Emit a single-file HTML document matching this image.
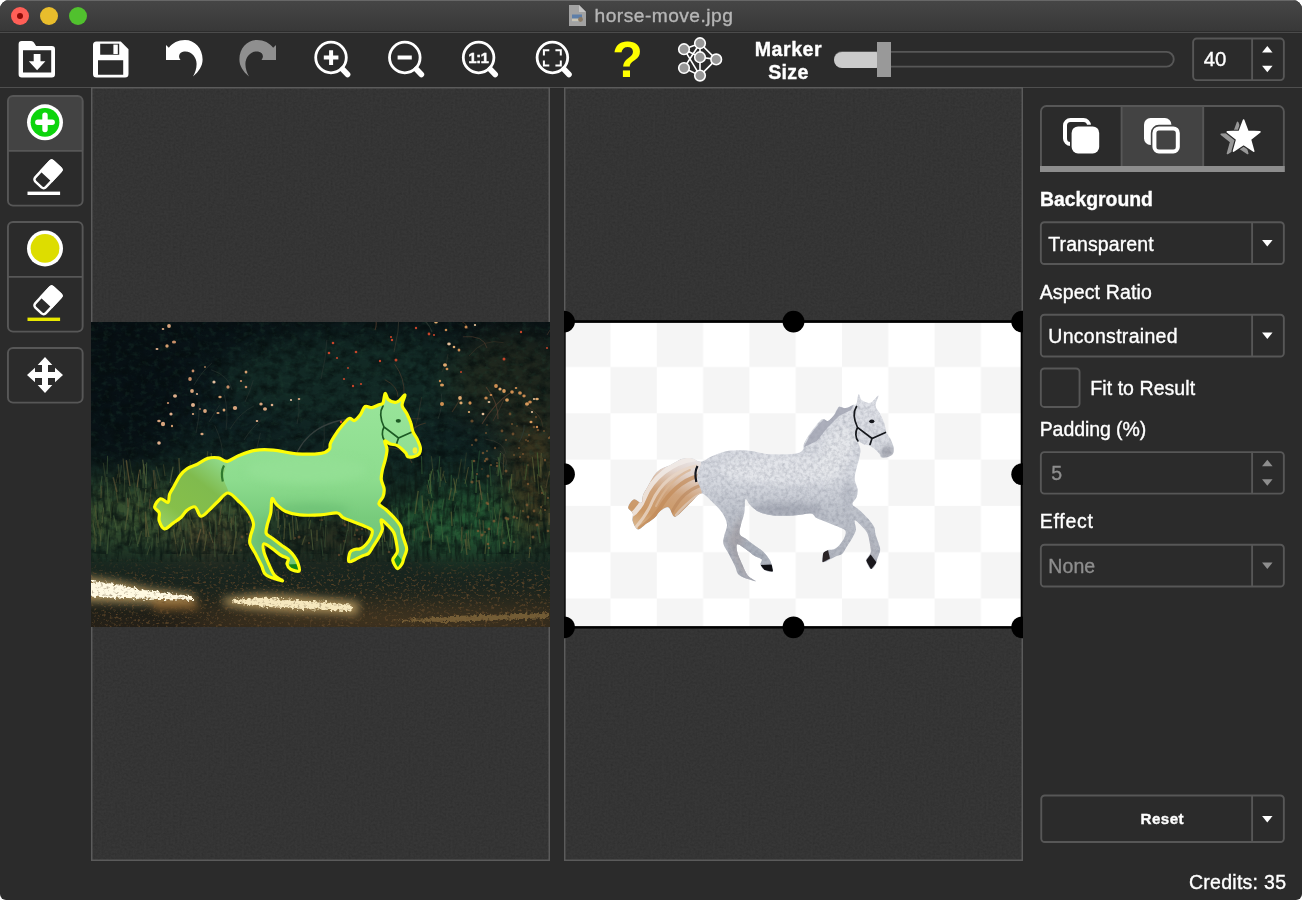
<!DOCTYPE html><html lang="en"><head><meta charset="utf-8"><title>horse-move.jpg</title><style>
*{box-sizing:border-box;margin:0;padding:0}
html,body{width:1302px;height:900px;background:#fff;overflow:hidden}
body{font-family:"Liberation Sans",sans-serif;color:#fff}
.win{will-change:transform;position:absolute;left:0;top:0;width:1302px;height:900px;background:#2b2b2b;border-radius:9px 9px 6px 6px;overflow:hidden}
.abs{position:absolute}
.tbar{left:0;top:0;width:1302px;height:31px;background:linear-gradient(#464646,#414141 35%,#383838)}
.tl{width:18px;height:18px;border-radius:9px;top:7px}
.title{top:5px;left:595px;font-size:18.4px;line-height:22px;color:#b6b6b6;white-space:nowrap}
.lbl{font-size:19.3px;line-height:22px;white-space:nowrap;color:#fff;-webkit-text-stroke:0.35px currentColor}
.b{font-weight:bold}
.box{border:1px solid #5d5d5d;border-radius:4.5px}
.dis{color:#8e8e8e}
svg{position:absolute;overflow:visible}
</style></head><body><div class="win">
<div class="abs tbar"></div>
<div class="abs" style="left:0;top:0;width:1302px;height:1px;background:#676767"></div>
<div class="abs" style="left:0;top:31px;width:1302px;height:1px;background:#2c2c2c"></div>
<div class="abs" style="left:0;top:32px;width:1302px;height:1px;background:#4b4b4b"></div>
<div class="abs tl" style="left:11px;background:#ff5f57"></div><div class="abs" style="left:17.2px;top:13.2px;width:5.4px;height:5.4px;border-radius:3px;background:#8c0a06"></div>
<div class="abs tl" style="left:40px;background:#e9bd2c"></div>
<div class="abs tl" style="left:69px;background:#51c12e"></div>
<svg style="left:569px;top:5px" width="17" height="21" viewBox="0 0 17 21"><path d="M0 0h10l7 7v14H0z" fill="#a2a2a2"/><path d="M10 0l7 7h-7z" fill="#c4c4c4"/><rect x="3" y="9.5" width="10" height="7" fill="#5d7ea8"/><rect x="3" y="13.5" width="10" height="3" fill="#c9c4b4"/><circle cx="11.5" cy="14.5" r="2.4" fill="#8a7a66"/></svg>
<div class="abs lbl" style="left:594.60px;top:5.15px;font-size:19.2px;line-height:22.0px;letter-spacing:0.459px;color:#b6b6b6;">horse-move.jpg</div>
<div class="abs" style="left:0;top:87px;width:1302px;height:1px;background:#4f4f4f"></div>
<svg style="left:0;top:0" width="1302" height="900" viewBox="0 0 1302 900"><path d="M18.6 44.2a3.2 3.2 0 0 1 3.2-3.2h9.4a3.2 3.2 0 0 1 2.7 1.5l2.2 3.5h15.7a3.2 3.2 0 0 1 3.2 3.2v25a3.2 3.2 0 0 1-3.2 3.2h-30a3.2 3.2 0 0 1-3.2-3.2zM23 50.2v22.3h28.2v-22.3z" fill="#fff" fill-rule="evenodd"/><path d="M33.7 54h6.8v7.2h4.9l-8.3 9l-8.3-9h4.9z" fill="#fff"/><path d="M93 45a3.5 3.5 0 0 1 3.5-3.5h24.3l7.7 7.7v24.8a3.5 3.5 0 0 1-3.5 3.5h-28.5a3.5 3.5 0 0 1-3.5-3.5zM100.2 43.8v10.9h19v-10.9z M98 60.3v14.4h25.2v-14.4z" fill="#fff" fill-rule="evenodd"/><rect x="113.4" y="44.6" width="4.4" height="9.4" fill="#fff"/><path d="M166 45L166 60L180.5 60C178 57 178.6 52.6 184 51.6C191 50.6 196.6 57 196.6 64C196.6 69 195 73 193 76.6C199 71.6 202.6 66 202.6 59.6C202.6 48 194.6 40 185 40C178 40 172.6 43 168.8 47.8Z" fill="#fff"/><path d="M166 45L166 60L180.5 60C178 57 178.6 52.6 184 51.6C191 50.6 196.6 57 196.6 64C196.6 69 195 73 193 76.6C199 71.6 202.6 66 202.6 59.6C202.6 48 194.6 40 185 40C178 40 172.6 43 168.8 47.8Z" fill="#8f8f8f" transform="translate(442,0) scale(-1,1)"/><circle cx="331" cy="57.5" r="15.3" fill="none" stroke="#fff" stroke-width="2.8"/><path d="M342.6 69.3L347.6 74.5" stroke="#fff" stroke-width="5.6" stroke-linecap="round"/><path d="M323.8 57.5h14.6M331.1 50.3v14.6" stroke="#fff" stroke-width="4"/><circle cx="404.8" cy="57.5" r="15.3" fill="none" stroke="#fff" stroke-width="2.8"/><path d="M416.40000000000003 69.3L421.40000000000003 74.5" stroke="#fff" stroke-width="5.6" stroke-linecap="round"/><path d="M397.6 57.5h14.2" stroke="#fff" stroke-width="4"/><circle cx="478.6" cy="57.5" r="15.3" fill="none" stroke="#fff" stroke-width="2.8"/><path d="M490.20000000000005 69.3L495.20000000000005 74.5" stroke="#fff" stroke-width="5.6" stroke-linecap="round"/><text x="478.6" y="62.6" font-family="Liberation Sans,sans-serif" font-weight="bold" font-size="14.5" text-anchor="middle" fill="#fff" stroke="#fff" stroke-width=".5" letter-spacing="-0.3">1:1</text><circle cx="552.4" cy="57.5" r="15.3" fill="none" stroke="#fff" stroke-width="2.8"/><path d="M564.0 69.3L569.0 74.5" stroke="#fff" stroke-width="5.6" stroke-linecap="round"/><path d="M543.9 55.5v-5.2h5.4M555.4 50.3h5.4v5.2M560.8 60.4v5.2h-5.4M549.3 65.6h-5.4v-5.2" fill="none" stroke="#fff" stroke-width="2"/><text x="627.6" y="77" font-family="Liberation Sans,sans-serif" font-weight="bold" font-size="50" text-anchor="middle" fill="#ffff00">?</text><path d="M684 49.2L700 43.2M684 49.2L700 57.2M684 49.2L700 75.6M684 68L700 43.2M684 68L700 75.6M700 43.2L716.2 59.4M700 57.2L716.2 59.4M700 75.6L716.2 59.4M700 57.2L700 75.6M700 43.2L700 57.2" stroke="#fff" stroke-width="1.6" fill="none"/><circle cx="700" cy="43.2" r="5.3" fill="#979797" stroke="#fff" stroke-width="1.6"/><circle cx="684" cy="49.2" r="5.3" fill="#979797" stroke="#fff" stroke-width="1.6"/><circle cx="700" cy="57.2" r="5.3" fill="#979797" stroke="#fff" stroke-width="1.6"/><circle cx="716.2" cy="59.4" r="5.3" fill="#979797" stroke="#fff" stroke-width="1.6"/><circle cx="684" cy="68" r="5.3" fill="#979797" stroke="#fff" stroke-width="1.6"/><circle cx="700" cy="75.6" r="5.3" fill="#979797" stroke="#fff" stroke-width="1.6"/></svg>
<div class="abs lbl" style="left:754.70px;top:38.01px;font-size:19.6px;line-height:22.0px;letter-spacing:0.543px;color:#fff;font-weight:bold;">Marker</div>
<div class="abs lbl" style="left:768.20px;top:60.71px;font-size:19.6px;line-height:22.0px;letter-spacing:0.293px;color:#fff;font-weight:bold;">Size</div>
<svg style="left:0;top:0" width="1302" height="900" viewBox="0 0 1302 900"><rect x="834.95" y="51.85" width="338.80" height="14.80" rx="7.35" fill="none" stroke="#575757" stroke-width="1.9"/><rect x="1193.15" y="38.55" width="90.70" height="41.60" rx="3.55" fill="none" stroke="#575757" stroke-width="1.9"/><path d="M1252.1 38V80.6" stroke="#575757" stroke-width="1.9"/></svg>
<div class="abs" style="left:834px;top:51.5px;width:50px;height:16px;border-radius:8px;background:#cbcbcb"></div>
<div class="abs" style="left:876.5px;top:42px;width:14.5px;height:35px;background:#999"></div>
<div class="abs lbl" style="left:1203.70px;top:48.13px;font-size:20.4px;line-height:22.0px;letter-spacing:0.000px;color:#fff;">40</div>
<svg style="left:0;top:0" width="1302" height="900"><path d="M1262.05 52.55h10.5l-5.25 -6.5z" fill="#fff"/><path d="M1262.05 65.75h10.5l-5.25 6.5z" fill="#fff"/></svg>
<svg style="left:0;top:0" width="1302" height="900" viewBox="0 0 1302 900"><path d="M8 102a6 6 0 0 1 6-6h63.5a6 6 0 0 1 6 6V150.5H8z" fill="#434343"/><rect x="7.95" y="95.95" width="74.70" height="109.70" rx="5.05" fill="none" stroke="#575757" stroke-width="1.9"/><path d="M7.5 150.9H83" stroke="#575757" stroke-width="1.9"/><rect x="7.95" y="221.95" width="74.70" height="109.70" rx="5.05" fill="none" stroke="#575757" stroke-width="1.9"/><path d="M7.5 276.9H83" stroke="#575757" stroke-width="1.9"/><rect x="7.95" y="347.95" width="74.70" height="54.70" rx="5.05" fill="none" stroke="#575757" stroke-width="1.9"/></svg>
<svg style="left:0;top:0" width="1302" height="900" viewBox="0 0 1302 900"><circle cx="45" cy="122.3" r="18" fill="#fff"/><circle cx="45" cy="122.3" r="14.4" fill="#0dd40d"/><path d="M37.8 122.3h14.4M45 115.1v14.4" stroke="#fff" stroke-width="5.4" stroke-linecap="round"/><g transform="translate(47.7,174.6) rotate(-47)"><rect x="-13.5" y="-7.25" width="27" height="14.5" rx="3" fill="none" stroke="#fff" stroke-width="2.5"/><path d="M-2.6 -8.5H12a2.75 2.75 0 0 1 2.75 2.75V5.75a2.75 2.75 0 0 1 -2.75 2.75H-2.6z" fill="#fff"/></g><rect x="27.5" y="191.6" width="32.6" height="3.4" fill="#fff"/><circle cx="45" cy="248.4" r="18" fill="#fff"/><circle cx="45" cy="248.4" r="14.4" fill="#dddd00"/><g transform="translate(47.7,300.6) rotate(-47)"><rect x="-13.5" y="-7.25" width="27" height="14.5" rx="3" fill="none" stroke="#fff" stroke-width="2.5"/><path d="M-2.6 -8.5H12a2.75 2.75 0 0 1 2.75 2.75V5.75a2.75 2.75 0 0 1 -2.75 2.75H-2.6z" fill="#fff"/></g><rect x="27.5" y="317.6" width="32.6" height="3.4" fill="#e8e800"/><path d="M45 357l7.3 8h-4.3v7h7v-4.3l8 7.3l-8 7.3v-4.3h-7v7h4.3l-7.3 8l-7.3-8h4.3v-7h-7v4.3l-8-7.3l8-7.3v4.3h7v-7h-4.3z" fill="#fff"/></svg>
<svg style="left:0;top:0" width="1302" height="900"><defs><filter id="grain" color-interpolation-filters="sRGB" x="0" y="0" width="100%" height="100%"><feTurbulence type="fractalNoise" baseFrequency="0.45" numOctaves="2" seed="3" result="n"/><feColorMatrix in="n" type="matrix" values="0 0 0 0 0  0 0 0 0 0  0 0 0 0 0  0.16 0.16 0 0 -0.12"/><feComposite operator="in" in2="SourceGraphic"/></filter></defs><rect x="91.75" y="87.75" width="457.5" height="772.5" fill="#373737" stroke="#5b5b5b" stroke-width="1.5"/><rect x="564.75" y="87.75" width="457.5" height="772.5" fill="#373737" stroke="#5b5b5b" stroke-width="1.5"/><rect x="92.5" y="88.5" width="456" height="771" fill="#000" filter="url(#grain)"/><rect x="565.5" y="88.5" width="456" height="771" fill="#000" filter="url(#grain)"/></svg>
<svg style="left:91px;top:322px;overflow:hidden" width="459" height="305" viewBox="0 0 459 305"><defs><linearGradient id="pbg" x1="0" y1="0" x2="0" y2="1"><stop offset="0" stop-color="#081115"/><stop offset="0.3" stop-color="#0c1b1f"/><stop offset="0.5" stop-color="#122823"/><stop offset="0.66" stop-color="#193325"/><stop offset="0.76" stop-color="#182c22"/><stop offset="0.8" stop-color="#18261f"/><stop offset="1" stop-color="#241f17"/></linearGradient><filter id="pb" color-interpolation-filters="sRGB" x="-30%" y="-30%" width="160%" height="160%"><feGaussianBlur stdDeviation="14"/></filter><filter id="pb2" color-interpolation-filters="sRGB" x="-30%" y="-30%" width="160%" height="160%"><feGaussianBlur stdDeviation="4"/></filter><filter id="pb1" color-interpolation-filters="sRGB" x="-30%" y="-60%" width="160%" height="220%"><feGaussianBlur stdDeviation="1.6"/></filter><filter id="leaf" color-interpolation-filters="sRGB" x="0" y="0" width="100%" height="100%"><feTurbulence type="fractalNoise" baseFrequency="0.09 0.11" numOctaves="4" seed="11"/><feColorMatrix type="matrix" values="0 0 0 0 0.02  0 0 0 0 0.05  0 0 0 0 0.05  1.6 0 0 0 -0.62"/></filter><filter id="leaf2" color-interpolation-filters="sRGB" x="0" y="0" width="100%" height="100%"><feTurbulence type="fractalNoise" baseFrequency="0.16 0.2" numOctaves="3" seed="5"/><feColorMatrix type="matrix" values="0 0 0 0 0.13  0 0 0 0 0.27  0 0 0 0 0.21  0 1.7 0 0 -0.85"/></filter><filter id="speck" color-interpolation-filters="sRGB" x="0" y="0" width="100%" height="100%"><feTurbulence type="fractalNoise" baseFrequency="0.32 0.4" numOctaves="3" seed="9"/><feColorMatrix type="matrix" values="0 0 0 0 0.36  0 0 0 0 0.27  0 0 0 0 0.16  0 0 3.2 0 -1.78"/></filter><filter id="grassf" color-interpolation-filters="sRGB" x="0" y="0" width="100%" height="100%"><feTurbulence type="fractalNoise" baseFrequency="0.25 0.05" numOctaves="3" seed="21"/><feColorMatrix type="matrix" values="0 0 0 0 0.05  0 0 0 0 0.1  0 0 0 0 0.08  0 0 2.2 0 -0.95"/></filter><filter id="rough" color-interpolation-filters="sRGB" x="-5%" y="-40%" width="110%" height="180%"><feTurbulence type="fractalNoise" baseFrequency="0.35" numOctaves="2" seed="2" result="t"/><feDisplacementMap in="SourceGraphic" in2="t" scale="7" xChannelSelector="R" yChannelSelector="G"/><feGaussianBlur stdDeviation="0.5"/></filter><linearGradient id="fadeg" x1="0" y1="0" x2="0" y2="1"><stop offset="0" stop-color="#fff" stop-opacity="0"/><stop offset="0.35" stop-color="#fff"/><stop offset="1" stop-color="#fff"/></linearGradient><mask id="gm"><rect x="0" y="232" width="459" height="73" fill="url(#fadeg)"/></mask><clipPath id="hcl"><path d="M238.3 127.2C239.8 125.5 238.4 123.7 239.4 121.4C240.3 119.1 242.3 116.0 244.0 113.3C245.7 110.6 247.5 108.1 249.8 105.3C252.1 102.5 255.6 97.7 257.9 96.6C260.2 95.5 261.6 99.2 263.5 98.5C265.4 97.8 267.7 94.8 269.5 92.5C271.3 90.2 272.2 85.6 274.1 84.5C276.0 83.4 278.7 85.9 281.0 85.6C283.3 85.3 286.2 83.5 288.0 82.7C289.8 81.9 291.0 82.9 292.0 81.0C293.0 79.1 293.2 72.1 294.1 71.5C295.0 70.9 295.5 76.0 297.2 77.5C298.9 79.0 302.3 80.2 304.1 80.4C305.9 80.6 306.6 79.9 308.2 78.7C309.9 77.5 313.5 72.3 314.0 73.1C314.5 73.9 310.8 80.3 311.1 83.3C311.4 86.4 314.3 88.5 315.7 91.4C317.1 94.3 318.7 97.5 319.7 100.6C320.8 103.7 320.9 107.2 322.0 109.9C323.1 112.6 324.9 114.2 326.1 116.8C327.3 119.4 328.9 123.0 329.3 125.5C329.6 128.0 329.3 130.3 328.2 131.8C327.1 133.3 324.5 134.2 322.6 134.7C320.7 135.2 318.1 135.4 316.8 134.7C315.4 134.0 316.2 132.5 314.5 130.7C312.8 128.9 308.9 125.1 306.4 123.7C303.9 122.2 301.6 122.8 299.5 122.0C297.4 121.2 294.3 118.2 293.7 119.1C293.1 120.0 295.9 124.1 296.0 127.2C296.1 130.3 295.1 134.1 294.3 137.6C293.5 141.1 292.1 144.7 291.4 148.0C290.7 151.3 290.0 154.4 290.3 157.5C290.6 160.6 292.8 163.8 293.1 166.7C293.4 169.6 292.9 172.3 292.0 174.8C291.1 177.3 287.4 179.7 287.9 181.8C288.4 183.9 292.1 185.0 294.8 187.5C297.5 190.0 301.6 193.9 304.1 196.8C306.6 199.7 308.8 202.4 309.9 204.9C311.0 207.4 310.2 208.9 311.0 211.8C311.8 214.7 313.7 219.5 314.5 222.2C315.3 224.9 315.9 225.7 315.6 228.0C315.3 230.3 313.6 233.8 312.8 236.1C312.0 238.4 312.1 240.2 311.0 241.9C309.9 243.6 307.9 247.1 306.4 246.5C304.9 245.9 302.2 240.5 301.8 238.4C301.4 236.3 303.3 235.3 304.1 233.8C304.9 232.3 306.2 231.5 306.4 229.2C306.6 226.9 305.8 223.0 305.2 219.9C304.6 216.8 304.2 213.4 302.9 210.7C301.6 208.0 299.3 205.8 297.2 203.7C295.1 201.6 291.2 197.3 290.2 197.9C289.2 198.5 291.8 204.3 291.4 207.2C291.0 210.1 289.4 212.4 287.9 215.3C286.3 218.2 283.8 221.8 282.1 224.5C280.4 227.2 279.2 230.0 277.5 231.5C275.8 233.0 273.8 232.8 271.7 233.8C269.6 234.7 267.1 236.2 264.8 237.2C262.5 238.2 258.9 240.8 257.9 239.6C256.9 238.5 258.1 232.3 259.0 230.3C259.9 228.3 261.9 228.0 263.6 227.4C265.3 226.8 267.5 227.7 269.4 226.8C271.3 225.9 273.5 224.1 275.2 222.2C276.9 220.3 278.8 217.6 279.8 215.3C280.8 213.0 281.8 210.0 281.0 208.3C280.2 206.6 278.1 206.2 275.2 204.9C272.3 203.6 267.5 201.8 263.6 200.3C259.8 198.7 255.0 197.2 252.1 195.6C249.2 194.1 250.1 191.5 246.3 191.0C242.5 190.5 235.8 192.6 229.5 192.9C223.2 193.2 214.5 193.5 208.7 192.9C202.9 192.3 198.6 191.2 194.8 189.5C190.9 187.8 187.9 184.6 185.6 182.5C183.3 180.4 182.0 175.3 181.0 176.7C180.0 178.0 180.6 186.4 179.8 190.6C179.0 194.9 177.2 198.7 176.4 202.2C175.6 205.7 174.4 209.1 175.2 211.4C176.0 213.7 178.5 214.1 181.0 216.0C183.5 217.9 187.3 220.9 190.2 223.0C193.1 225.1 196.0 226.7 198.3 228.8C200.6 230.9 202.7 233.6 204.1 235.7C205.6 237.8 206.3 239.3 207.0 241.5C207.7 243.7 209.4 248.0 208.1 249.0C206.9 250.0 201.5 248.4 199.5 247.2C197.5 246.0 196.4 243.7 196.0 242.0C195.6 240.3 198.2 238.2 197.2 236.8C196.2 235.4 192.9 235.1 190.2 233.4C187.5 231.7 183.9 228.3 181.0 226.4C178.1 224.5 174.2 221.2 172.9 221.8C171.5 222.4 172.1 226.6 172.9 229.9C173.7 233.2 175.8 237.7 177.5 241.5C179.2 245.3 181.0 250.1 183.3 253.0C185.6 255.9 192.7 258.8 191.4 258.8C190.0 258.8 178.7 255.5 175.2 253.0C171.7 250.5 172.3 247.3 170.6 243.8C168.9 240.3 166.7 235.9 164.8 232.2C162.9 228.5 159.9 224.9 159.0 221.8C158.1 218.7 159.0 217.0 159.6 213.7C160.2 210.4 162.8 206.1 162.5 202.2C162.2 198.4 160.2 194.3 157.9 190.6C155.6 186.9 152.1 183.5 148.6 180.2C145.1 176.9 140.7 171.2 137.1 171.0C133.5 170.8 130.4 176.3 127.2 179.2C124.0 182.1 120.8 185.9 117.9 188.4C115.0 190.9 112.1 194.8 109.8 194.2C107.5 193.6 106.3 185.9 104.0 184.9C101.7 183.9 98.2 186.7 95.9 188.4C93.6 190.1 92.5 193.2 90.2 195.3C87.9 197.4 84.9 199.2 82.1 201.1C79.3 203.0 75.7 207.3 73.4 206.9C71.1 206.5 69.1 201.5 68.2 198.8C67.3 196.1 69.0 193.0 68.2 190.7C67.4 188.4 63.4 187.2 63.6 184.9C63.8 182.6 67.2 177.6 69.4 176.8C71.6 176.0 75.4 181.1 76.9 180.3C78.4 179.5 77.6 174.9 78.6 172.2C79.7 169.5 81.5 167.2 83.2 164.1C84.9 161.0 86.9 156.6 89.0 153.7C91.1 150.8 93.0 148.7 95.9 146.8C98.8 144.9 102.8 143.9 106.3 142.2C109.8 140.5 113.3 137.5 116.8 136.4C120.3 135.3 123.9 135.3 127.2 135.8C130.5 136.3 132.9 139.7 136.4 139.3C139.9 138.9 143.4 135.3 148.0 133.5C152.6 131.7 158.3 129.2 164.1 128.3C169.9 127.4 175.7 127.5 182.6 128.1C189.5 128.7 197.6 131.3 205.5 131.8C213.4 132.3 224.7 132.1 230.2 131.3C235.7 130.5 236.8 128.8 238.3 127.2Z"/></clipPath><linearGradient id="grn" gradientUnits="userSpaceOnUse" x1="0" y1="75" x2="0" y2="260"><stop offset="0" stop-color="#99e59a"/><stop offset="0.45" stop-color="#8ddc8e"/><stop offset="0.65" stop-color="#78cb7c"/><stop offset="1" stop-color="#6cc274"/></linearGradient><linearGradient id="tailgl" gradientUnits="userSpaceOnUse" x1="130" y1="140" x2="80" y2="205"><stop offset="0" stop-color="#8fd888"/><stop offset="0.35" stop-color="#80bb4e"/><stop offset="0.8" stop-color="#86bf4a"/><stop offset="1" stop-color="#94cc60"/></linearGradient></defs><rect width="459" height="305" fill="url(#pbg)"/><g filter="url(#pb)"><ellipse cx="270" cy="60" rx="140" ry="50" fill="#142d27" opacity=".85"/><ellipse cx="30" cy="70" rx="70" ry="80" fill="#070f14" opacity=".85"/><ellipse cx="60" cy="192" rx="125" ry="30" fill="#38502f"/><ellipse cx="120" cy="215" rx="42" ry="16" fill="#54442c" opacity=".75"/><ellipse cx="372" cy="200" rx="68" ry="30" fill="#255a34"/><ellipse cx="442" cy="150" rx="26" ry="70" fill="#43381f" opacity=".9"/><ellipse cx="245" cy="215" rx="55" ry="16" fill="#35301f" opacity=".8"/><ellipse cx="420" cy="60" rx="60" ry="50" fill="#242a1e" opacity=".8"/><ellipse cx="240" cy="256" rx="260" ry="11" fill="#17241f"/><ellipse cx="300" cy="298" rx="210" ry="8" fill="#5e4828"/></g><rect width="459" height="232" fill="#000" filter="url(#leaf)"/><rect width="459" height="240" fill="#000" filter="url(#leaf2)" opacity=".55"/><rect x="0" y="140" width="459" height="100" filter="url(#grassf)"/><g mask="url(#gm)"><rect x="0" y="232" width="459" height="73" filter="url(#speck)"/></g><g filter="url(#pb2)" opacity=".8"><path d="M-10 254L30 260L60 267L104 273L104 282L50 281L-10 279z" fill="#caa86a"/><path d="M60 279l44 0l6 8l-46 1z" fill="#9a6a30"/><path d="M132 276L170 272L205 274L240 277L268 280L266 293L240 291L200 290L160 287L134 283z" fill="#c9a868"/></g><g filter="url(#rough)"><path d="M-8 258L25 262L50 267.5L102 274.5L102 278L50 276.5L-8 274.5z" fill="#fff9e2"/><path d="M142 278L170 275.5L200 277.5L240 280.5L262 283L261 289.5L240 288L200 286.5L165 284L143 281z" fill="#f6e8be"/><path d="M300 299l60-5l99-3v5l-100 4z" fill="#8d7040" opacity=".7"/></g><g mask="url(#gm)" opacity=".5"><rect x="0" y="250" width="459" height="55" filter="url(#speck)"/></g><path d="M149 163q-1.7 -9.9 -3.4 -19.7" stroke="#6a5a38" stroke-width="0.8" fill="none" opacity="0.61"/><path d="M418 168q-0.3 -4.8 -0.7 -9.5" stroke="#5a5a34" stroke-width="0.8" fill="none" opacity="0.54"/><path d="M380 161q0.5 -6.0 1.0 -12.0" stroke="#3d6a3c" stroke-width="1.1" fill="none" opacity="0.53"/><path d="M448 154q-0.8 -11.7 -1.7 -23.5" stroke="#4a6e3a" stroke-width="1.1" fill="none" opacity="0.61"/><path d="M257 209q0.3 -4.9 0.6 -9.9" stroke="#55603a" stroke-width="1.0" fill="none" opacity="0.60"/><path d="M29 155q0.7 -5.9 1.4 -11.7" stroke="#3a5236" stroke-width="1.2" fill="none" opacity="0.56"/><path d="M424 181q-1.3 -6.2 -2.6 -12.5" stroke="#5a5a34" stroke-width="0.8" fill="none" opacity="0.49"/><path d="M34 194q-0.6 -5.5 -1.3 -11.0" stroke="#3a5236" stroke-width="1.0" fill="none" opacity="0.78"/><path d="M36 198q1.3 -11.1 2.5 -22.2" stroke="#5a5a34" stroke-width="1.2" fill="none" opacity="0.62"/><path d="M218 207q0.8 -4.5 1.6 -9.1" stroke="#4a5a30" stroke-width="1.1" fill="none" opacity="0.66"/><path d="M205 212q-0.6 -12.0 -1.2 -24.0" stroke="#3a5236" stroke-width="0.9" fill="none" opacity="0.62"/><path d="M183 229q-1.3 -8.5 -2.7 -16.9" stroke="#3a5236" stroke-width="1.1" fill="none" opacity="0.75"/><path d="M376 224q-0.3 -6.5 -0.7 -13.0" stroke="#6a5a38" stroke-width="1.2" fill="none" opacity="0.52"/><path d="M106 157q0.6 -5.4 1.3 -10.7" stroke="#46603a" stroke-width="1.0" fill="none" opacity="0.62"/><path d="M121 150q-0.5 -7.8 -1.0 -15.5" stroke="#6a5a38" stroke-width="0.9" fill="none" opacity="0.41"/><path d="M394 232q1.0 -9.9 1.9 -19.8" stroke="#4e5c34" stroke-width="1.3" fill="none" opacity="0.70"/><path d="M401 219q-0.4 -7.5 -0.8 -15.1" stroke="#2f5a38" stroke-width="1.0" fill="none" opacity="0.53"/><path d="M87 235q-1.6 -8.0 -3.1 -15.9" stroke="#6a5a38" stroke-width="0.7" fill="none" opacity="0.35"/><path d="M69 159q-1.9 -7.3 -3.8 -14.5" stroke="#55603a" stroke-width="1.1" fill="none" opacity="0.42"/><path d="M116 180q-1.5 -7.3 -3.0 -14.6" stroke="#3a5236" stroke-width="1.4" fill="none" opacity="0.56"/><path d="M122 221q-1.9 -5.5 -3.8 -10.9" stroke="#6a5a38" stroke-width="1.0" fill="none" opacity="0.66"/><path d="M420 215q0.6 -6.7 1.1 -13.4" stroke="#2f5a38" stroke-width="1.2" fill="none" opacity="0.47"/><path d="M358 178q1.2 -6.0 2.5 -12.0" stroke="#5a5a34" stroke-width="1.3" fill="none" opacity="0.72"/><path d="M340 169q-0.6 -8.7 -1.2 -17.3" stroke="#3d6a3c" stroke-width="1.4" fill="none" opacity="0.71"/><path d="M371 212q1.9 -7.1 3.8 -14.3" stroke="#2f5a38" stroke-width="0.9" fill="none" opacity="0.45"/><path d="M90 168q1.6 -9.6 3.2 -19.2" stroke="#46603a" stroke-width="1.0" fill="none" opacity="0.64"/><path d="M367 157q1.6 -9.9 3.3 -19.9" stroke="#5a5a34" stroke-width="1.0" fill="none" opacity="0.43"/><path d="M362 179q1.9 -11.2 3.8 -22.4" stroke="#5c6436" stroke-width="1.0" fill="none" opacity="0.68"/><path d="M39 164q-1.9 -12.9 -3.8 -25.9" stroke="#6a5a38" stroke-width="1.3" fill="none" opacity="0.71"/><path d="M67 221q0.6 -12.8 1.3 -25.6" stroke="#5a5a34" stroke-width="0.8" fill="none" opacity="0.60"/><path d="M10 219q-1.6 -10.5 -3.2 -21.1" stroke="#4a5a30" stroke-width="1.4" fill="none" opacity="0.55"/><path d="M400 221q-1.0 -5.9 -2.0 -11.8" stroke="#2a4a30" stroke-width="1.1" fill="none" opacity="0.69"/><path d="M150 197q-1.8 -11.5 -3.5 -23.0" stroke="#4a5a30" stroke-width="0.9" fill="none" opacity="0.56"/><path d="M268 228q1.7 -7.8 3.3 -15.6" stroke="#6a5a38" stroke-width="0.8" fill="none" opacity="0.42"/><path d="M234 225q0.4 -11.0 0.9 -22.0" stroke="#55603a" stroke-width="0.8" fill="none" opacity="0.56"/><path d="M333 198q0.1 -6.9 0.1 -13.9" stroke="#4e5c34" stroke-width="1.2" fill="none" opacity="0.40"/><path d="M233 198q1.6 -10.8 3.3 -21.7" stroke="#3a5236" stroke-width="0.9" fill="none" opacity="0.79"/><path d="M371 194q0.1 -6.2 0.2 -12.5" stroke="#2a4a30" stroke-width="1.3" fill="none" opacity="0.75"/><path d="M93 188q-0.4 -7.7 -0.9 -15.5" stroke="#5a5a34" stroke-width="0.8" fill="none" opacity="0.46"/><path d="M34 208q1.6 -11.1 3.2 -22.1" stroke="#55603a" stroke-width="1.4" fill="none" opacity="0.64"/><path d="M343 158q-1.3 -12.0 -2.7 -23.9" stroke="#5a5a34" stroke-width="0.8" fill="none" opacity="0.54"/><path d="M331 152q-0.2 -9.0 -0.5 -18.0" stroke="#3d6a3c" stroke-width="1.0" fill="none" opacity="0.58"/><path d="M136 233q1.7 -5.0 3.3 -10.0" stroke="#55603a" stroke-width="1.4" fill="none" opacity="0.40"/><path d="M122 153q-0.9 -11.0 -1.8 -22.0" stroke="#55603a" stroke-width="1.3" fill="none" opacity="0.73"/><path d="M310 231q0.1 -7.7 0.3 -15.3" stroke="#4e5c34" stroke-width="1.2" fill="none" opacity="0.39"/><path d="M26 209q-1.7 -7.8 -3.4 -15.7" stroke="#46603a" stroke-width="1.1" fill="none" opacity="0.71"/><path d="M38 224q1.5 -4.6 2.9 -9.2" stroke="#3a5236" stroke-width="0.7" fill="none" opacity="0.80"/><path d="M192 229q-1.8 -9.6 -3.7 -19.2" stroke="#4a5a30" stroke-width="0.9" fill="none" opacity="0.40"/><path d="M74 154q-0.8 -5.8 -1.5 -11.6" stroke="#5a5a34" stroke-width="1.1" fill="none" opacity="0.44"/><path d="M205 208q1.2 -6.4 2.4 -12.9" stroke="#5a5a34" stroke-width="0.7" fill="none" opacity="0.36"/><path d="M232 234q-1.0 -8.6 -2.0 -17.3" stroke="#3a5236" stroke-width="0.8" fill="none" opacity="0.72"/><path d="M198 193q-0.4 -11.5 -0.9 -23.0" stroke="#6a5a38" stroke-width="0.9" fill="none" opacity="0.45"/><path d="M105 167q0.9 -11.9 1.8 -23.9" stroke="#55603a" stroke-width="1.0" fill="none" opacity="0.51"/><path d="M25 161q1.0 -4.6 1.9 -9.3" stroke="#5a5a34" stroke-width="1.0" fill="none" opacity="0.37"/><path d="M275 210q-1.3 -4.4 -2.5 -8.8" stroke="#5a5a34" stroke-width="1.0" fill="none" opacity="0.47"/><path d="M441 234q-1.0 -8.9 -2.0 -17.8" stroke="#2a4a30" stroke-width="0.9" fill="none" opacity="0.43"/><path d="M114 217q1.3 -4.8 2.5 -9.6" stroke="#55603a" stroke-width="1.0" fill="none" opacity="0.37"/><path d="M10 176q0.3 -6.1 0.7 -12.2" stroke="#6a5a38" stroke-width="1.3" fill="none" opacity="0.42"/><path d="M410 217q1.1 -9.4 2.1 -18.7" stroke="#4e5c34" stroke-width="0.8" fill="none" opacity="0.68"/><path d="M288 213q-1.4 -11.3 -2.9 -22.6" stroke="#6a5a38" stroke-width="1.2" fill="none" opacity="0.61"/><path d="M373 151q1.2 -10.2 2.4 -20.4" stroke="#5a5a34" stroke-width="0.8" fill="none" opacity="0.37"/><path d="M292 233q-0.2 -7.4 -0.4 -14.8" stroke="#46603a" stroke-width="1.1" fill="none" opacity="0.63"/><path d="M312 192q1.2 -4.0 2.4 -8.1" stroke="#2f5a38" stroke-width="1.2" fill="none" opacity="0.38"/><path d="M338 172q-0.9 -4.7 -1.9 -9.3" stroke="#5a5a34" stroke-width="0.9" fill="none" opacity="0.64"/><path d="M211 223q1.6 -4.7 3.3 -9.4" stroke="#5a5a34" stroke-width="1.2" fill="none" opacity="0.63"/><path d="M341 176q-2.0 -9.1 -3.9 -18.2" stroke="#3d6a3c" stroke-width="1.0" fill="none" opacity="0.79"/><path d="M46 169q0.8 -8.4 1.7 -16.8" stroke="#5a5a34" stroke-width="1.0" fill="none" opacity="0.56"/><path d="M54 227q1.9 -5.8 3.8 -11.6" stroke="#3a5236" stroke-width="0.7" fill="none" opacity="0.56"/><path d="M376 233q-0.9 -8.0 -1.9 -16.1" stroke="#5a5a34" stroke-width="1.3" fill="none" opacity="0.77"/><path d="M34 158q-1.0 -10.7 -1.9 -21.5" stroke="#5a5a34" stroke-width="0.8" fill="none" opacity="0.72"/><path d="M234 226q-1.1 -10.3 -2.1 -20.7" stroke="#3a5236" stroke-width="1.0" fill="none" opacity="0.42"/><path d="M436 209q0.9 -7.6 1.8 -15.3" stroke="#5c6436" stroke-width="0.9" fill="none" opacity="0.49"/><path d="M386 150q1.4 -10.8 2.7 -21.5" stroke="#2f5a38" stroke-width="1.4" fill="none" opacity="0.44"/><path d="M5 214q-1.7 -6.3 -3.5 -12.6" stroke="#3a5236" stroke-width="1.4" fill="none" opacity="0.62"/><path d="M47 222q1.7 -6.6 3.5 -13.1" stroke="#55603a" stroke-width="1.4" fill="none" opacity="0.55"/><path d="M145 216q-0.3 -11.1 -0.6 -22.1" stroke="#46603a" stroke-width="1.3" fill="none" opacity="0.63"/><path d="M419 231q0.9 -8.9 1.8 -17.9" stroke="#3d6a3c" stroke-width="1.4" fill="none" opacity="0.53"/><path d="M419 197q-0.3 -5.5 -0.7 -11.1" stroke="#2a4a30" stroke-width="0.9" fill="none" opacity="0.68"/><path d="M448 172q-0.8 -9.9 -1.6 -19.8" stroke="#5c6436" stroke-width="0.8" fill="none" opacity="0.64"/><path d="M35 193q0.2 -11.3 0.4 -22.6" stroke="#3a5236" stroke-width="1.3" fill="none" opacity="0.80"/><path d="M261 226q-0.3 -10.7 -0.7 -21.5" stroke="#3a5236" stroke-width="1.2" fill="none" opacity="0.44"/><path d="M124 215q0.3 -8.5 0.6 -17.0" stroke="#5a5a34" stroke-width="0.8" fill="none" opacity="0.58"/><path d="M289 224q-0.9 -5.9 -1.8 -11.9" stroke="#55603a" stroke-width="1.0" fill="none" opacity="0.64"/><path d="M58 187q1.2 -10.9 2.4 -21.7" stroke="#6a5a38" stroke-width="1.0" fill="none" opacity="0.38"/><path d="M427 230q-0.1 -8.8 -0.3 -17.5" stroke="#4e5c34" stroke-width="0.9" fill="none" opacity="0.40"/><path d="M71 195q1.8 -10.1 3.5 -20.3" stroke="#4a5a30" stroke-width="1.2" fill="none" opacity="0.73"/><path d="M411 157q-2.0 -11.0 -4.0 -22.0" stroke="#4a6e3a" stroke-width="0.9" fill="none" opacity="0.76"/><path d="M292 210q-1.7 -5.0 -3.4 -10.0" stroke="#6a5a38" stroke-width="1.4" fill="none" opacity="0.44"/><path d="M120 218q0.1 -4.0 0.3 -8.0" stroke="#3a5236" stroke-width="0.9" fill="none" opacity="0.49"/><path d="M385 171q0.2 -8.7 0.4 -17.5" stroke="#3d6a3c" stroke-width="1.4" fill="none" opacity="0.67"/><path d="M141 152q0.7 -8.5 1.4 -17.0" stroke="#3a5236" stroke-width="0.8" fill="none" opacity="0.45"/><path d="M134 223q-0.0 -4.6 -0.0 -9.2" stroke="#55603a" stroke-width="0.9" fill="none" opacity="0.72"/><path d="M106 169q-0.8 -10.8 -1.6 -21.7" stroke="#6a5a38" stroke-width="1.0" fill="none" opacity="0.43"/><path d="M103 186q1.8 -10.0 3.6 -20.0" stroke="#55603a" stroke-width="1.3" fill="none" opacity="0.37"/><path d="M11 201q0.8 -7.7 1.7 -15.5" stroke="#55603a" stroke-width="1.0" fill="none" opacity="0.75"/><path d="M406 213q1.7 -13.0 3.5 -26.0" stroke="#6a5a38" stroke-width="0.8" fill="none" opacity="0.64"/><path d="M241 190q0.9 -6.8 1.8 -13.6" stroke="#5a5a34" stroke-width="1.4" fill="none" opacity="0.55"/><path d="M50 157q-0.3 -4.7 -0.6 -9.5" stroke="#46603a" stroke-width="1.1" fill="none" opacity="0.69"/><path d="M174 216q1.2 -6.8 2.4 -13.6" stroke="#46603a" stroke-width="0.7" fill="none" opacity="0.56"/><path d="M171 229q-0.5 -5.7 -1.1 -11.5" stroke="#3a5236" stroke-width="0.7" fill="none" opacity="0.53"/><path d="M373 216q-1.9 -4.4 -3.7 -8.7" stroke="#2f5a38" stroke-width="1.3" fill="none" opacity="0.38"/><path d="M89 155q-0.5 -9.5 -1.1 -18.9" stroke="#5a5a34" stroke-width="1.4" fill="none" opacity="0.63"/><path d="M120 212q-0.9 -6.8 -1.8 -13.7" stroke="#46603a" stroke-width="1.2" fill="none" opacity="0.62"/><path d="M370 231q1.3 -4.6 2.6 -9.2" stroke="#2f5a38" stroke-width="1.0" fill="none" opacity="0.78"/><path d="M438 183q-0.3 -6.3 -0.6 -12.5" stroke="#4e5c34" stroke-width="0.8" fill="none" opacity="0.57"/><path d="M4 230q0.8 -6.7 1.5 -13.5" stroke="#55603a" stroke-width="1.1" fill="none" opacity="0.50"/><path d="M147 181q-1.7 -11.0 -3.4 -22.1" stroke="#55603a" stroke-width="1.0" fill="none" opacity="0.42"/><path d="M187 206q0.2 -8.3 0.4 -16.7" stroke="#55603a" stroke-width="1.4" fill="none" opacity="0.75"/><path d="M453 173q-1.6 -4.8 -3.2 -9.5" stroke="#4e5c34" stroke-width="1.4" fill="none" opacity="0.79"/><path d="M79 161q1.6 -8.1 3.1 -16.3" stroke="#55603a" stroke-width="1.2" fill="none" opacity="0.73"/><path d="M114 171q1.5 -5.4 3.1 -10.8" stroke="#6a5a38" stroke-width="0.8" fill="none" opacity="0.38"/><path d="M116 171q0.6 -8.7 1.2 -17.5" stroke="#46603a" stroke-width="1.2" fill="none" opacity="0.80"/><path d="M47 191q1.4 -11.4 2.7 -22.7" stroke="#5a5a34" stroke-width="0.7" fill="none" opacity="0.48"/><path d="M55 166q0.3 -12.8 0.7 -25.5" stroke="#46603a" stroke-width="1.0" fill="none" opacity="0.74"/><path d="M49 201q-1.1 -9.6 -2.3 -19.2" stroke="#5a5a34" stroke-width="0.9" fill="none" opacity="0.37"/><path d="M459 153q1.7 -10.6 3.3 -21.2" stroke="#3d6a3c" stroke-width="1.3" fill="none" opacity="0.53"/><path d="M171 203q-1.9 -4.7 -3.7 -9.4" stroke="#3a5236" stroke-width="1.1" fill="none" opacity="0.38"/><path d="M47 184q0.6 -9.0 1.1 -17.9" stroke="#46603a" stroke-width="1.2" fill="none" opacity="0.53"/><path d="M124 235q-0.3 -10.0 -0.7 -20.0" stroke="#46603a" stroke-width="0.9" fill="none" opacity="0.60"/><path d="M3 228q1.3 -7.8 2.6 -15.6" stroke="#3a5236" stroke-width="1.1" fill="none" opacity="0.51"/><path d="M355 161q-1.4 -4.5 -2.9 -8.9" stroke="#5c6436" stroke-width="0.8" fill="none" opacity="0.63"/><path d="M170 193q-0.9 -5.3 -1.7 -10.6" stroke="#6a5a38" stroke-width="0.8" fill="none" opacity="0.38"/><path d="M176 215q1.2 -11.1 2.4 -22.3" stroke="#5a5a34" stroke-width="0.8" fill="none" opacity="0.77"/><path d="M448 192q1.7 -4.5 3.4 -9.0" stroke="#5c6436" stroke-width="0.8" fill="none" opacity="0.67"/><path d="M316 227q1.4 -9.8 2.9 -19.5" stroke="#5c6436" stroke-width="1.1" fill="none" opacity="0.44"/><path d="M217 199q1.8 -4.4 3.5 -8.8" stroke="#55603a" stroke-width="1.0" fill="none" opacity="0.41"/><path d="M113 212q-1.8 -12.1 -3.7 -24.2" stroke="#6a5a38" stroke-width="1.3" fill="none" opacity="0.65"/><path d="M390 217q-0.8 -9.8 -1.5 -19.7" stroke="#5a5a34" stroke-width="1.0" fill="none" opacity="0.65"/><path d="M59 187q-0.2 -4.8 -0.5 -9.7" stroke="#6a5a38" stroke-width="1.2" fill="none" opacity="0.37"/><path d="M60 229q0.9 -6.8 1.8 -13.6" stroke="#46603a" stroke-width="0.7" fill="none" opacity="0.58"/><path d="M173 232q1.4 -5.2 2.9 -10.5" stroke="#6a5a38" stroke-width="1.2" fill="none" opacity="0.72"/><path d="M89 234q1.8 -8.4 3.7 -16.9" stroke="#55603a" stroke-width="1.2" fill="none" opacity="0.67"/><path d="M101 222q-1.0 -9.5 -2.0 -19.0" stroke="#5a5a34" stroke-width="1.3" fill="none" opacity="0.47"/><path d="M374 162q1.7 -8.5 3.4 -17.0" stroke="#5a5a34" stroke-width="1.1" fill="none" opacity="0.63"/><path d="M109 182q-0.4 -5.8 -0.8 -11.6" stroke="#4a5a30" stroke-width="1.4" fill="none" opacity="0.66"/><path d="M411 165q-1.5 -11.1 -3.1 -22.1" stroke="#3d6a3c" stroke-width="1.1" fill="none" opacity="0.51"/><path d="M401 198q1.5 -9.2 3.1 -18.4" stroke="#2f5a38" stroke-width="0.9" fill="none" opacity="0.59"/><path d="M393 213q-0.5 -7.3 -1.0 -14.7" stroke="#6a5a38" stroke-width="1.1" fill="none" opacity="0.51"/><path d="M351 188q1.0 -5.6 1.9 -11.2" stroke="#3d6a3c" stroke-width="0.9" fill="none" opacity="0.58"/><path d="M142 233q1.7 -11.8 3.4 -23.7" stroke="#5a5a34" stroke-width="1.2" fill="none" opacity="0.69"/><path d="M102 175q-0.3 -9.6 -0.7 -19.3" stroke="#5a5a34" stroke-width="1.3" fill="none" opacity="0.41"/><path d="M104 206q-2.0 -4.2 -4.0 -8.4" stroke="#5a5a34" stroke-width="0.9" fill="none" opacity="0.59"/><path d="M168 221q-1.9 -5.4 -3.9 -10.9" stroke="#55603a" stroke-width="1.2" fill="none" opacity="0.55"/><path d="M29 162q-0.9 -10.0 -1.8 -20.0" stroke="#5a5a34" stroke-width="1.4" fill="none" opacity="0.38"/><path d="M377 227q0.3 -9.4 0.6 -18.7" stroke="#4e5c34" stroke-width="0.9" fill="none" opacity="0.76"/><path d="M20 196q-1.0 -7.7 -2.1 -15.3" stroke="#46603a" stroke-width="1.3" fill="none" opacity="0.40"/><path d="M281 206q-0.3 -5.8 -0.7 -11.6" stroke="#6a5a38" stroke-width="1.1" fill="none" opacity="0.58"/><path d="M294 220q-0.8 -5.6 -1.5 -11.1" stroke="#5a5a34" stroke-width="1.1" fill="none" opacity="0.80"/><path d="M332 191q-0.5 -8.8 -1.0 -17.7" stroke="#5c6436" stroke-width="1.2" fill="none" opacity="0.56"/><path d="M340 189q-1.6 -6.0 -3.2 -12.1" stroke="#5a5a34" stroke-width="1.2" fill="none" opacity="0.41"/><path d="M409 230q-0.9 -12.5 -1.9 -25.0" stroke="#3d6a3c" stroke-width="0.9" fill="none" opacity="0.60"/><path d="M200 218q-0.9 -8.7 -1.9 -17.4" stroke="#4a5a30" stroke-width="1.3" fill="none" opacity="0.75"/><path d="M39 194q1.6 -5.5 3.2 -11.1" stroke="#4a5a30" stroke-width="0.8" fill="none" opacity="0.42"/><path d="M420 167q0.4 -7.5 0.8 -15.0" stroke="#5c6436" stroke-width="1.3" fill="none" opacity="0.63"/><path d="M318 207q-0.1 -12.8 -0.2 -25.6" stroke="#3d6a3c" stroke-width="1.3" fill="none" opacity="0.55"/><path d="M333 199q-1.2 -6.8 -2.3 -13.5" stroke="#2f5a38" stroke-width="1.1" fill="none" opacity="0.43"/><path d="M15 160q-1.4 -9.6 -2.7 -19.2" stroke="#55603a" stroke-width="1.2" fill="none" opacity="0.36"/><path d="M64 205q-1.7 -4.4 -3.5 -8.8" stroke="#46603a" stroke-width="0.7" fill="none" opacity="0.62"/><path d="M167 220q1.6 -11.4 3.1 -22.8" stroke="#46603a" stroke-width="1.3" fill="none" opacity="0.69"/><path d="M16 232q1.0 -12.2 2.0 -24.4" stroke="#46603a" stroke-width="1.3" fill="none" opacity="0.63"/><path d="M132 159q1.0 -4.9 2.1 -9.8" stroke="#55603a" stroke-width="0.9" fill="none" opacity="0.50"/><path d="M120 180q-1.8 -12.4 -3.6 -24.7" stroke="#5a5a34" stroke-width="1.3" fill="none" opacity="0.70"/><path d="M276 191q1.0 -6.6 2.0 -13.2" stroke="#3a5236" stroke-width="0.7" fill="none" opacity="0.58"/><path d="M45 190q0.3 -4.4 0.5 -8.9" stroke="#4a5a30" stroke-width="1.3" fill="none" opacity="0.39"/><path d="M376 165q-1.2 -4.0 -2.4 -8.0" stroke="#3d6a3c" stroke-width="0.7" fill="none" opacity="0.57"/><path d="M226 219q-0.0 -5.7 -0.0 -11.3" stroke="#5a5a34" stroke-width="1.4" fill="none" opacity="0.58"/><path d="M106 164q1.1 -12.4 2.1 -24.9" stroke="#3a5236" stroke-width="1.3" fill="none" opacity="0.66"/><path d="M361 204q-0.4 -7.2 -0.8 -14.4" stroke="#5c6436" stroke-width="1.3" fill="none" opacity="0.69"/><path d="M194 206q-0.8 -7.3 -1.6 -14.7" stroke="#3a5236" stroke-width="1.3" fill="none" opacity="0.58"/><path d="M174 226q-0.2 -6.1 -0.3 -12.2" stroke="#6a5a38" stroke-width="1.1" fill="none" opacity="0.66"/><path d="M398 189q-0.7 -9.0 -1.4 -18.0" stroke="#4e5c34" stroke-width="1.0" fill="none" opacity="0.70"/><path d="M109 166q0.8 -6.7 1.6 -13.4" stroke="#6a5a38" stroke-width="0.8" fill="none" opacity="0.42"/><path d="M114 178q-1.4 -8.7 -2.7 -17.4" stroke="#5a5a34" stroke-width="1.4" fill="none" opacity="0.47"/><path d="M438 236q0.6 -5.5 1.3 -11.0" stroke="#5a5a34" stroke-width="1.0" fill="none" opacity="0.79"/><path d="M365 213q-1.2 -7.9 -2.4 -15.8" stroke="#2f5a38" stroke-width="0.9" fill="none" opacity="0.75"/><path d="M102 234q-1.9 -6.7 -3.8 -13.3" stroke="#5a5a34" stroke-width="1.1" fill="none" opacity="0.53"/><path d="M340 228q0.3 -7.9 0.6 -15.7" stroke="#5c6436" stroke-width="1.3" fill="none" opacity="0.65"/><path d="M299 225q0.3 -9.8 0.7 -19.6" stroke="#55603a" stroke-width="1.2" fill="none" opacity="0.64"/><path d="M193 217q0.5 -10.4 1.0 -20.8" stroke="#5a5a34" stroke-width="1.3" fill="none" opacity="0.57"/><path d="M9 224q0.6 -8.7 1.3 -17.3" stroke="#55603a" stroke-width="1.3" fill="none" opacity="0.50"/><path d="M5 222q-1.6 -12.2 -3.1 -24.3" stroke="#5a5a34" stroke-width="1.1" fill="none" opacity="0.42"/><path d="M359 231q-1.6 -8.7 -3.2 -17.3" stroke="#4e5c34" stroke-width="1.1" fill="none" opacity="0.67"/><path d="M235 205q0.1 -11.5 0.2 -22.9" stroke="#3a5236" stroke-width="1.2" fill="none" opacity="0.56"/><path d="M455 166q1.7 -8.6 3.5 -17.2" stroke="#6a5a38" stroke-width="1.1" fill="none" opacity="0.46"/><path d="M289 208q-1.6 -9.2 -3.1 -18.4" stroke="#5a5a34" stroke-width="1.2" fill="none" opacity="0.77"/><path d="M97 161q1.2 -11.0 2.5 -22.0" stroke="#4a5a30" stroke-width="0.8" fill="none" opacity="0.64"/><path d="M331 220q0.7 -5.3 1.3 -10.6" stroke="#5c6436" stroke-width="1.0" fill="none" opacity="0.48"/><path d="M390 173q-1.0 -7.4 -2.0 -14.8" stroke="#5c6436" stroke-width="1.2" fill="none" opacity="0.57"/><path d="M370 219q0.6 -7.2 1.2 -14.4" stroke="#6a5a38" stroke-width="1.0" fill="none" opacity="0.54"/><path d="M293 207q1.7 -7.3 3.4 -14.5" stroke="#3a5236" stroke-width="0.7" fill="none" opacity="0.72"/><path d="M416 217q1.3 -5.3 2.7 -10.5" stroke="#3d6a3c" stroke-width="1.2" fill="none" opacity="0.44"/><path d="M33 175q0.3 -9.5 0.6 -18.9" stroke="#55603a" stroke-width="0.8" fill="none" opacity="0.55"/><path d="M360 168q0.1 -7.6 0.3 -15.2" stroke="#2f5a38" stroke-width="1.2" fill="none" opacity="0.75"/><path d="M362 222q0.8 -5.8 1.5 -11.6" stroke="#2f5a38" stroke-width="1.2" fill="none" opacity="0.55"/><path d="M405 198q-1.1 -6.4 -2.1 -12.8" stroke="#4a6e3a" stroke-width="1.0" fill="none" opacity="0.60"/><path d="M222 228q-1.0 -10.3 -2.0 -20.6" stroke="#55603a" stroke-width="1.1" fill="none" opacity="0.74"/><path d="M3 222q0.3 -8.2 0.5 -16.4" stroke="#4a5a30" stroke-width="0.9" fill="none" opacity="0.56"/><path d="M195 236q-1.3 -10.1 -2.6 -20.2" stroke="#5a5a34" stroke-width="1.1" fill="none" opacity="0.36"/><path d="M280 209q-0.7 -12.4 -1.4 -24.8" stroke="#46603a" stroke-width="1.1" fill="none" opacity="0.57"/><path d="M412 153q0.5 -10.5 1.0 -20.9" stroke="#6a5a38" stroke-width="0.8" fill="none" opacity="0.65"/><path d="M157 217q1.6 -9.0 3.3 -18.0" stroke="#5a5a34" stroke-width="1.0" fill="none" opacity="0.54"/><path d="M254 221q1.3 -6.6 2.6 -13.3" stroke="#3a5236" stroke-width="0.9" fill="none" opacity="0.79"/><path d="M401 180q-0.0 -5.8 -0.1 -11.7" stroke="#2f5a38" stroke-width="0.9" fill="none" opacity="0.49"/><path d="M137 200q1.1 -9.7 2.3 -19.4" stroke="#46603a" stroke-width="1.0" fill="none" opacity="0.60"/><path d="M186 199q-1.6 -7.6 -3.1 -15.2" stroke="#46603a" stroke-width="0.8" fill="none" opacity="0.76"/><path d="M279 207q1.6 -11.1 3.3 -22.2" stroke="#6a5a38" stroke-width="1.0" fill="none" opacity="0.42"/><path d="M309 209q-1.7 -11.9 -3.3 -23.8" stroke="#3d6a3c" stroke-width="1.2" fill="none" opacity="0.56"/><path d="M350 159q-1.9 -5.6 -3.7 -11.3" stroke="#2f5a38" stroke-width="1.3" fill="none" opacity="0.65"/><path d="M169 221q0.2 -11.1 0.5 -22.2" stroke="#5a5a34" stroke-width="1.3" fill="none" opacity="0.43"/><path d="M16 152q0.3 -9.1 0.6 -18.2" stroke="#46603a" stroke-width="1.0" fill="none" opacity="0.58"/><path d="M379 217q0.8 -7.8 1.6 -15.6" stroke="#5c6436" stroke-width="1.0" fill="none" opacity="0.36"/><path d="M178 201q1.9 -12.4 3.8 -24.9" stroke="#3a5236" stroke-width="1.2" fill="none" opacity="0.60"/><path d="M38 191q0.5 -12.1 1.0 -24.1" stroke="#3a5236" stroke-width="0.7" fill="none" opacity="0.66"/><path d="M56 233q1.5 -4.8 3.0 -9.6" stroke="#55603a" stroke-width="1.0" fill="none" opacity="0.47"/><path d="M168 214q-1.4 -10.3 -2.8 -20.5" stroke="#46603a" stroke-width="0.9" fill="none" opacity="0.60"/><path d="M229 208q1.7 -12.0 3.3 -24.0" stroke="#46603a" stroke-width="1.2" fill="none" opacity="0.36"/><path d="M7 206q-1.7 -11.4 -3.4 -22.7" stroke="#5a5a34" stroke-width="0.9" fill="none" opacity="0.62"/><path d="M440 222q-0.7 -9.5 -1.5 -19.0" stroke="#4e5c34" stroke-width="1.0" fill="none" opacity="0.42"/><path d="M444 160q-1.3 -12.6 -2.7 -25.2" stroke="#5c6436" stroke-width="1.0" fill="none" opacity="0.70"/><path d="M128 203q1.2 -9.9 2.4 -19.7" stroke="#6a5a38" stroke-width="0.9" fill="none" opacity="0.62"/><path d="M449 221q-0.8 -9.4 -1.5 -18.8" stroke="#5c6436" stroke-width="1.4" fill="none" opacity="0.46"/><path d="M207 209q-0.9 -6.9 -1.9 -13.8" stroke="#55603a" stroke-width="1.1" fill="none" opacity="0.72"/><path d="M407 154q1.2 -11.5 2.5 -23.0" stroke="#4a6e3a" stroke-width="0.9" fill="none" opacity="0.73"/><path d="M370 209q-0.6 -12.2 -1.2 -24.4" stroke="#2f5a38" stroke-width="1.1" fill="none" opacity="0.57"/><path d="M175 218q1.9 -10.5 3.9 -21.0" stroke="#5a5a34" stroke-width="1.1" fill="none" opacity="0.65"/><path d="M363 190q1.2 -4.8 2.5 -9.6" stroke="#2f5a38" stroke-width="0.9" fill="none" opacity="0.61"/><path d="M412 226q-0.1 -8.7 -0.2 -17.4" stroke="#5a5a34" stroke-width="0.8" fill="none" opacity="0.44"/><path d="M83 210q0.3 -7.3 0.5 -14.5" stroke="#3a5236" stroke-width="1.2" fill="none" opacity="0.74"/><path d="M113 229q1.5 -8.4 2.9 -16.9" stroke="#5a5a34" stroke-width="1.1" fill="none" opacity="0.70"/><path d="M72 201q0.1 -7.1 0.2 -14.2" stroke="#46603a" stroke-width="0.8" fill="none" opacity="0.44"/><path d="M400 199q-1.1 -9.3 -2.3 -18.6" stroke="#2a4a30" stroke-width="1.0" fill="none" opacity="0.78"/><path d="M352 220q-1.0 -12.7 -2.0 -25.3" stroke="#3d6a3c" stroke-width="0.9" fill="none" opacity="0.80"/><path d="M324 192q1.6 -11.6 3.2 -23.2" stroke="#5c6436" stroke-width="1.3" fill="none" opacity="0.67"/><path d="M41 177q-1.6 -6.1 -3.3 -12.2" stroke="#4a5a30" stroke-width="1.1" fill="none" opacity="0.43"/><path d="M390 182q0.9 -6.1 1.8 -12.2" stroke="#4a6e3a" stroke-width="0.7" fill="none" opacity="0.47"/><path d="M162 228q1.3 -12.1 2.7 -24.3" stroke="#46603a" stroke-width="0.9" fill="none" opacity="0.58"/><path d="M339 216q-1.6 -8.4 -3.2 -16.7" stroke="#6a5a38" stroke-width="1.2" fill="none" opacity="0.77"/><path d="M48 178q-1.5 -6.3 -3.0 -12.6" stroke="#3a5236" stroke-width="1.0" fill="none" opacity="0.55"/><path d="M371 229q-0.1 -12.0 -0.3 -24.1" stroke="#5a5a34" stroke-width="1.3" fill="none" opacity="0.42"/><path d="M382 157q-0.5 -9.6 -1.0 -19.1" stroke="#4a6e3a" stroke-width="1.2" fill="none" opacity="0.78"/><path d="M425 183q-1.7 -4.2 -3.4 -8.4" stroke="#6a5a38" stroke-width="0.9" fill="none" opacity="0.46"/><path d="M53 181q0.9 -7.0 1.9 -14.0" stroke="#55603a" stroke-width="1.2" fill="none" opacity="0.60"/><path d="M66 225q-0.4 -6.4 -0.7 -12.8" stroke="#55603a" stroke-width="0.7" fill="none" opacity="0.61"/><path d="M136 219q-1.6 -6.3 -3.1 -12.7" stroke="#3a5236" stroke-width="1.3" fill="none" opacity="0.40"/><path d="M449 155q0.7 -12.1 1.3 -24.1" stroke="#5a5a34" stroke-width="1.1" fill="none" opacity="0.73"/><path d="M55 215q-0.3 -12.7 -0.5 -25.5" stroke="#5a5a34" stroke-width="1.4" fill="none" opacity="0.77"/><path d="M45 175q-1.8 -12.1 -3.5 -24.1" stroke="#4a5a30" stroke-width="1.4" fill="none" opacity="0.41"/><path d="M203 218q-0.9 -12.5 -1.7 -25.0" stroke="#5a5a34" stroke-width="1.0" fill="none" opacity="0.76"/><path d="M100 199q-1.3 -5.2 -2.6 -10.5" stroke="#55603a" stroke-width="1.2" fill="none" opacity="0.44"/><path d="M36 158q-0.0 -9.5 -0.0 -19.0" stroke="#5a5a34" stroke-width="0.8" fill="none" opacity="0.41"/><path d="M307 204q-0.8 -5.7 -1.5 -11.5" stroke="#3d6a3c" stroke-width="0.7" fill="none" opacity="0.68"/><path d="M187 212q1.2 -4.5 2.5 -9.0" stroke="#5a5a34" stroke-width="0.9" fill="none" opacity="0.64"/><path d="M434 158q1.1 -7.7 2.1 -15.4" stroke="#4a6e3a" stroke-width="1.3" fill="none" opacity="0.47"/><path d="M85 222q-1.3 -7.3 -2.7 -14.6" stroke="#5a5a34" stroke-width="1.1" fill="none" opacity="0.74"/><path d="M163 230q-1.7 -12.7 -3.4 -25.4" stroke="#5a5a34" stroke-width="1.2" fill="none" opacity="0.72"/><path d="M397 178q-0.5 -10.4 -0.9 -20.8" stroke="#3d6a3c" stroke-width="0.9" fill="none" opacity="0.40"/><path d="M336 188q1.2 -4.2 2.4 -8.5" stroke="#4a6e3a" stroke-width="0.7" fill="none" opacity="0.79"/><path d="M103 166q-1.0 -4.9 -2.0 -9.8" stroke="#46603a" stroke-width="0.7" fill="none" opacity="0.77"/><path d="M339 172q0.5 -11.5 1.1 -23.1" stroke="#4e5c34" stroke-width="1.1" fill="none" opacity="0.67"/><path d="M47 225q-1.8 -10.5 -3.6 -20.9" stroke="#46603a" stroke-width="1.0" fill="none" opacity="0.61"/><path d="M350 159q1.5 -5.1 3.1 -10.2" stroke="#5a5a34" stroke-width="1.3" fill="none" opacity="0.42"/><path d="M263 214q1.3 -5.5 2.6 -11.0" stroke="#4a5a30" stroke-width="1.0" fill="none" opacity="0.54"/><path d="M385 195q1.8 -7.6 3.5 -15.1" stroke="#6a5a38" stroke-width="0.9" fill="none" opacity="0.46"/><path d="M419 220q-1.8 -11.6 -3.6 -23.3" stroke="#4a6e3a" stroke-width="1.4" fill="none" opacity="0.77"/><path d="M114 186q-0.5 -9.7 -1.1 -19.4" stroke="#6a5a38" stroke-width="0.8" fill="none" opacity="0.50"/><path d="M92 208q-0.3 -6.0 -0.6 -12.1" stroke="#3a5236" stroke-width="1.2" fill="none" opacity="0.77"/><path d="M291 220q1.5 -12.0 3.1 -23.9" stroke="#46603a" stroke-width="1.3" fill="none" opacity="0.63"/><path d="M421 204q1.2 -9.7 2.5 -19.3" stroke="#3d6a3c" stroke-width="1.1" fill="none" opacity="0.46"/><path d="M140 206q0.4 -5.1 0.8 -10.2" stroke="#6a5a38" stroke-width="1.3" fill="none" opacity="0.39"/><path d="M271 230q0.0 -8.0 0.1 -15.9" stroke="#5a5a34" stroke-width="1.3" fill="none" opacity="0.61"/><path d="M126 213q-0.9 -10.7 -1.7 -21.3" stroke="#3a5236" stroke-width="1.1" fill="none" opacity="0.61"/><path d="M252 203q-0.8 -8.2 -1.5 -16.4" stroke="#55603a" stroke-width="0.9" fill="none" opacity="0.43"/><path d="M251 233q1.7 -7.6 3.4 -15.1" stroke="#55603a" stroke-width="1.3" fill="none" opacity="0.46"/><path d="M256 192q2.0 -6.6 3.9 -13.1" stroke="#5a5a34" stroke-width="0.7" fill="none" opacity="0.36"/><path d="M253 202q0.6 -7.1 1.3 -14.3" stroke="#6a5a38" stroke-width="1.0" fill="none" opacity="0.55"/><path d="M338 159q1.8 -6.0 3.7 -12.1" stroke="#4a6e3a" stroke-width="1.0" fill="none" opacity="0.65"/><path d="M64 167q-0.9 -9.5 -1.8 -19.0" stroke="#6a5a38" stroke-width="0.8" fill="none" opacity="0.74"/><path d="M423 236q0.5 -6.4 1.0 -12.8" stroke="#4a6e3a" stroke-width="1.0" fill="none" opacity="0.40"/><path d="M188 197q-0.4 -5.1 -0.8 -10.1" stroke="#6a5a38" stroke-width="0.8" fill="none" opacity="0.73"/><path d="M128 203q1.4 -5.0 2.8 -10.0" stroke="#4a5a30" stroke-width="1.0" fill="none" opacity="0.68"/><path d="M134 184q-0.5 -9.0 -0.9 -18.0" stroke="#5a5a34" stroke-width="0.7" fill="none" opacity="0.69"/><path d="M454 183q0.1 -6.7 0.3 -13.4" stroke="#4a6e3a" stroke-width="1.0" fill="none" opacity="0.52"/><path d="M106 221q1.9 -7.0 3.8 -13.9" stroke="#6a5a38" stroke-width="1.3" fill="none" opacity="0.78"/><path d="M94 187q-2.0 -12.2 -3.9 -24.4" stroke="#46603a" stroke-width="0.9" fill="none" opacity="0.75"/><path d="M138 196q0.5 -6.8 1.0 -13.6" stroke="#3a5236" stroke-width="1.1" fill="none" opacity="0.58"/><path d="M161 232q0.1 -10.1 0.2 -20.2" stroke="#46603a" stroke-width="1.0" fill="none" opacity="0.58"/><path d="M298 230q-1.2 -5.4 -2.5 -10.8" stroke="#3a5236" stroke-width="1.0" fill="none" opacity="0.55"/><path d="M287 236q0.1 -7.1 0.2 -14.2" stroke="#46603a" stroke-width="0.8" fill="none" opacity="0.49"/><path d="M449 221q-1.6 -8.6 -3.1 -17.2" stroke="#2a4a30" stroke-width="1.2" fill="none" opacity="0.72"/><path d="M455 226q-1.4 -7.8 -2.7 -15.6" stroke="#2a4a30" stroke-width="1.3" fill="none" opacity="0.44"/><path d="M410 185q0.3 -4.5 0.5 -9.1" stroke="#2f5a38" stroke-width="0.9" fill="none" opacity="0.80"/><path d="M141 209q-0.8 -4.0 -1.6 -8.1" stroke="#46603a" stroke-width="1.1" fill="none" opacity="0.65"/><path d="M90 193q-0.9 -9.0 -1.9 -18.0" stroke="#4a5a30" stroke-width="1.3" fill="none" opacity="0.58"/><path d="M66 167q-1.4 -9.4 -2.8 -18.8" stroke="#6a5a38" stroke-width="1.2" fill="none" opacity="0.40"/><path d="M46 165q1.3 -8.7 2.6 -17.4" stroke="#6a5a38" stroke-width="1.0" fill="none" opacity="0.71"/><path d="M298 209q-1.4 -9.2 -2.8 -18.4" stroke="#55603a" stroke-width="0.9" fill="none" opacity="0.43"/><path d="M122 159q0.3 -12.1 0.7 -24.3" stroke="#5a5a34" stroke-width="0.8" fill="none" opacity="0.63"/><path d="M9 169q1.1 -7.6 2.1 -15.1" stroke="#46603a" stroke-width="1.0" fill="none" opacity="0.63"/><path d="M114 154q1.4 -12.4 2.8 -24.8" stroke="#5a5a34" stroke-width="0.7" fill="none" opacity="0.74"/><path d="M450 156q0.7 -10.1 1.4 -20.2" stroke="#5a5a34" stroke-width="1.0" fill="none" opacity="0.53"/><path d="M78 183q1.5 -4.1 3.1 -8.1" stroke="#3a5236" stroke-width="1.1" fill="none" opacity="0.40"/><path d="M57 221q-1.0 -7.2 -2.0 -14.3" stroke="#55603a" stroke-width="1.0" fill="none" opacity="0.51"/><path d="M111 161q0.2 -5.8 0.4 -11.5" stroke="#55603a" stroke-width="1.1" fill="none" opacity="0.56"/><path d="M365 171q-1.1 -7.3 -2.3 -14.6" stroke="#5c6436" stroke-width="1.0" fill="none" opacity="0.78"/><path d="M95 232q-1.1 -8.5 -2.2 -17.1" stroke="#3a5236" stroke-width="1.2" fill="none" opacity="0.77"/><path d="M458 201q2.0 -8.0 3.9 -15.9" stroke="#5a5a34" stroke-width="1.0" fill="none" opacity="0.58"/><path d="M58 215q-1.6 -10.1 -3.3 -20.2" stroke="#5a5a34" stroke-width="1.2" fill="none" opacity="0.69"/><path d="M13 212q-1.9 -5.3 -3.9 -10.6" stroke="#4a5a30" stroke-width="0.8" fill="none" opacity="0.43"/><path d="M391 178q-1.6 -10.0 -3.1 -19.9" stroke="#6a5a38" stroke-width="1.3" fill="none" opacity="0.69"/><path d="M89 212q-0.8 -4.8 -1.7 -9.6" stroke="#4a5a30" stroke-width="1.0" fill="none" opacity="0.51"/><path d="M388 190q0.5 -9.7 1.0 -19.3" stroke="#4a6e3a" stroke-width="1.4" fill="none" opacity="0.43"/><path d="M168 219q1.6 -10.2 3.2 -20.4" stroke="#46603a" stroke-width="1.2" fill="none" opacity="0.66"/><path d="M114 223q0.5 -7.2 1.0 -14.3" stroke="#55603a" stroke-width="0.9" fill="none" opacity="0.47"/><path d="M339 198q1.8 -9.7 3.5 -19.3" stroke="#5a5a34" stroke-width="1.1" fill="none" opacity="0.67"/><path d="M117 187q-0.6 -10.2 -1.2 -20.3" stroke="#46603a" stroke-width="0.8" fill="none" opacity="0.69"/><path d="M301 227q0.3 -11.9 0.7 -23.8" stroke="#3d6a3c" stroke-width="1.4" fill="none" opacity="0.66"/><path d="M17 177q-0.6 -11.0 -1.2 -22.0" stroke="#46603a" stroke-width="1.0" fill="none" opacity="0.68"/><path d="M458 203q0.1 -6.0 0.2 -12.0" stroke="#6a5a38" stroke-width="1.4" fill="none" opacity="0.54"/><path d="M427 209q1.3 -10.6 2.6 -21.3" stroke="#4e5c34" stroke-width="1.1" fill="none" opacity="0.65"/><path d="M95 208q1.1 -11.6 2.2 -23.2" stroke="#3a5236" stroke-width="1.2" fill="none" opacity="0.37"/><path d="M323 219q0.2 -6.4 0.4 -12.7" stroke="#5a5a34" stroke-width="1.1" fill="none" opacity="0.46"/><path d="M27 181q-1.2 -7.7 -2.4 -15.4" stroke="#5a5a34" stroke-width="0.8" fill="none" opacity="0.66"/><path d="M223 192q-2.0 -10.4 -4.0 -20.7" stroke="#4a5a30" stroke-width="1.0" fill="none" opacity="0.77"/><path d="M349 165q0.4 -10.0 0.8 -20.0" stroke="#4e5c34" stroke-width="1.3" fill="none" opacity="0.53"/><path d="M95 209q-0.1 -4.1 -0.1 -8.2" stroke="#46603a" stroke-width="0.7" fill="none" opacity="0.48"/><path d="M90 210q-1.5 -8.0 -3.1 -16.1" stroke="#5a5a34" stroke-width="1.0" fill="none" opacity="0.61"/><path d="M133 198q-0.1 -4.4 -0.3 -8.8" stroke="#3a5236" stroke-width="0.8" fill="none" opacity="0.67"/><path d="M450 198q-0.0 -5.0 -0.1 -10.0" stroke="#5c6436" stroke-width="1.0" fill="none" opacity="0.70"/><path d="M148 181q-0.9 -4.8 -1.7 -9.6" stroke="#6a5a38" stroke-width="1.4" fill="none" opacity="0.64"/><path d="M115 171q-1.9 -5.2 -3.8 -10.5" stroke="#3a5236" stroke-width="1.3" fill="none" opacity="0.48"/><path d="M85 205q1.7 -11.6 3.4 -23.2" stroke="#55603a" stroke-width="0.8" fill="none" opacity="0.67"/><path d="M142 203q0.6 -7.4 1.2 -14.8" stroke="#5a5a34" stroke-width="0.9" fill="none" opacity="0.52"/><path d="M19 199q1.3 -9.7 2.6 -19.3" stroke="#4a5a30" stroke-width="1.0" fill="none" opacity="0.37"/><path d="M99 186q2.0 -10.6 4.0 -21.2" stroke="#6a5a38" stroke-width="1.1" fill="none" opacity="0.39"/><path d="M41 153q-1.2 -8.0 -2.5 -15.9" stroke="#4a5a30" stroke-width="1.0" fill="none" opacity="0.36"/><path d="M280 222q-1.4 -8.6 -2.9 -17.2" stroke="#46603a" stroke-width="1.2" fill="none" opacity="0.58"/><path d="M379 228q-0.8 -5.5 -1.6 -11.0" stroke="#4e5c34" stroke-width="1.3" fill="none" opacity="0.65"/><path d="M260 190q0.1 -8.9 0.1 -17.8" stroke="#3a5236" stroke-width="1.4" fill="none" opacity="0.76"/><path d="M397 234q0.5 -12.7 1.0 -25.3" stroke="#3d6a3c" stroke-width="1.2" fill="none" opacity="0.50"/><path d="M302 199q-0.5 -7.8 -1.1 -15.6" stroke="#4a6e3a" stroke-width="0.9" fill="none" opacity="0.50"/><path d="M406 152q0.7 -5.7 1.4 -11.4" stroke="#4e5c34" stroke-width="1.2" fill="none" opacity="0.42"/><path d="M266 198q-0.6 -12.5 -1.1 -25.0" stroke="#55603a" stroke-width="1.1" fill="none" opacity="0.53"/><path d="M52 166q0.2 -12.0 0.4 -24.0" stroke="#46603a" stroke-width="0.9" fill="none" opacity="0.73"/><path d="M104 189q0.8 -8.9 1.6 -17.7" stroke="#4a5a30" stroke-width="1.1" fill="none" opacity="0.61"/><path d="M37 185q-0.2 -4.7 -0.5 -9.3" stroke="#6a5a38" stroke-width="1.1" fill="none" opacity="0.67"/><path d="M347 160q0.9 -12.9 1.8 -25.8" stroke="#2f5a38" stroke-width="1.0" fill="none" opacity="0.66"/><path d="M250 233q-0.1 -5.7 -0.2 -11.4" stroke="#46603a" stroke-width="0.8" fill="none" opacity="0.70"/><path d="M26 170q-1.9 -7.4 -3.9 -14.7" stroke="#6a5a38" stroke-width="1.4" fill="none" opacity="0.56"/><path d="M55 162q-1.6 -12.2 -3.3 -24.4" stroke="#55603a" stroke-width="1.1" fill="none" opacity="0.76"/><path d="M400 164q-0.6 -10.7 -1.3 -21.4" stroke="#3d6a3c" stroke-width="1.3" fill="none" opacity="0.41"/><path d="M171 213q0.9 -12.5 1.8 -25.1" stroke="#46603a" stroke-width="1.3" fill="none" opacity="0.51"/><path d="M418 171q0.8 -7.2 1.6 -14.4" stroke="#3d6a3c" stroke-width="1.3" fill="none" opacity="0.61"/><path d="M52 152q1.2 -5.0 2.4 -10.0" stroke="#55603a" stroke-width="0.8" fill="none" opacity="0.77"/><path d="M401 208q0.4 -11.5 0.7 -23.1" stroke="#2a4a30" stroke-width="1.1" fill="none" opacity="0.66"/><path d="M415 143q2.2 -7.7 -6.1 -14.1" stroke="#3a3a30" stroke-width="0.9" fill="none" opacity=".7"/><path d="M341 10q-6.8 -20.1 -35.9 -18.0" stroke="#2f3a34" stroke-width="1.1" fill="none" opacity=".7"/><path d="M452 105q-1.5 -14.2 -18.4 -21.7" stroke="#4a3a2a" stroke-width="0.8" fill="none" opacity=".7"/><path d="M351 50q5.8 -9.5 6.0 -17.9" stroke="#3a3a30" stroke-width="0.7" fill="none" opacity=".7"/><path d="M313 73q1.2 -16.2 -9.3 -30.9" stroke="#5a4030" stroke-width="0.8" fill="none" opacity=".7"/><path d="M307 75q0.0 -10.9 -13.2 -17.3" stroke="#4a3a2a" stroke-width="1.0" fill="none" opacity=".7"/><path d="M396 26q-3.2 -13.3 -24.1 -11.2" stroke="#5a4030" stroke-width="0.8" fill="none" opacity=".7"/><path d="M361 90q6.8 -9.6 9.5 -16.7" stroke="#4a3a2a" stroke-width="1.1" fill="none" opacity=".7"/><path d="M407 97q0.4 -17.0 -11.9 -31.9" stroke="#5a4030" stroke-width="1.1" fill="none" opacity=".7"/><path d="M285 121q-1.2 -9.6 -17.3 -8.5" stroke="#5a4030" stroke-width="1.0" fill="none" opacity=".7"/><path d="M347 97q5.0 -12.8 3.4 -25.3" stroke="#2f3a34" stroke-width="0.8" fill="none" opacity=".7"/><path d="M391 102q12.3 -20.8 27.8 -30.8" stroke="#5a4030" stroke-width="1.1" fill="none" opacity=".7"/><path d="M415 150q-0.1 -9.8 -13.5 -14.1" stroke="#2f3a34" stroke-width="0.8" fill="none" opacity=".7"/><path d="M321 117q6.9 -21.4 9.6 -41.8" stroke="#3a3a30" stroke-width="0.8" fill="none" opacity=".7"/><path d="M301 110q12.6 -15.8 28.6 -13.2" stroke="#5a4030" stroke-width="0.6" fill="none" opacity=".7"/><path d="M274 139q-0.8 -16.3 -15.9 -28.4" stroke="#5a4030" stroke-width="1.2" fill="none" opacity=".7"/><path d="M312 117q10.8 -13.9 22.8 -16.0" stroke="#4a3a2a" stroke-width="1.1" fill="none" opacity=".7"/><path d="M303 30q5.5 -21.0 5.1 -41.6" stroke="#3a3a30" stroke-width="1.0" fill="none" opacity=".7"/><path d="M284 8q3.3 -8.2 -2.2 -16.3" stroke="#5a4030" stroke-width="1.1" fill="none" opacity=".7"/><path d="M378 34q14.4 -18.5 34.6 -13.3" stroke="#4a3a2a" stroke-width="0.6" fill="none" opacity=".7"/><path d="M415 132q-2.1 -12.6 -20.4 -14.8" stroke="#3a3a30" stroke-width="0.8" fill="none" opacity=".7"/><path d="M377 7q-3.0 -12.3 -23.3 -8.3" stroke="#5a4030" stroke-width="0.8" fill="none" opacity=".7"/><path d="M402 99q7.7 -13.6 12.2 -24.3" stroke="#5a4030" stroke-width="0.7" fill="none" opacity=".7"/><path d="M428 120q5.5 -8.8 5.1 -16.9" stroke="#2f3a34" stroke-width="1.2" fill="none" opacity=".7"/><path d="M321 141q-7.7 -20.6 -38.9 -13.7" stroke="#5a4030" stroke-width="0.9" fill="none" opacity=".7"/><path d="M456 13q9.5 -16.7 18.4 -27.9" stroke="#5a4030" stroke-width="0.7" fill="none" opacity=".7"/><path d="M103 63q8.3 -14.1 17.8 -21.9" stroke="#2a3430" stroke-width=".9" fill="none" opacity=".7"/><path d="M154 80q5.5 -11.8 8.3 -22.1" stroke="#2a3430" stroke-width=".9" fill="none" opacity=".7"/><path d="M230 57q4.8 -19.8 5.9 -39.1" stroke="#2a3430" stroke-width=".9" fill="none" opacity=".7"/><path d="M135 108q2.5 -17.7 -1.6 -35.3" stroke="#2a3430" stroke-width=".9" fill="none" opacity=".7"/><path d="M105 111q3.9 -15.6 3.1 -31.1" stroke="#2a3430" stroke-width=".9" fill="none" opacity=".7"/><path d="M206 102q3.4 -12.0 1.4 -24.0" stroke="#2a3430" stroke-width=".9" fill="none" opacity=".7"/><path d="M141 68q-3.2 -14.5 -20.8 -20.2" stroke="#2a3430" stroke-width=".9" fill="none" opacity=".7"/><path d="M221 147q4.4 -9.4 4.8 -18.1" stroke="#2a3430" stroke-width=".9" fill="none" opacity=".7"/><path d="M160 148q5.8 -19.2 9.5 -37.2" stroke="#2a3430" stroke-width=".9" fill="none" opacity=".7"/><path d="M118 100q6.2 -10.1 10.6 -17.1" stroke="#2a3430" stroke-width=".9" fill="none" opacity=".7"/><path d="M139 107q10.2 -16.7 24.1 -23.2" stroke="#2a3430" stroke-width=".9" fill="none" opacity=".7"/><path d="M231 134q3.6 -17.2 2.0 -34.4" stroke="#2a3430" stroke-width=".9" fill="none" opacity=".7"/><path d="M153 118q8.1 -13.0 17.2 -19.6" stroke="#2a3430" stroke-width=".9" fill="none" opacity=".7"/><path d="M132 140q0.5 -18.8 -8.3 -36.6" stroke="#2a3430" stroke-width=".9" fill="none" opacity=".7"/><path d="M200 150C205 120 225 100 260 97" stroke="#3a4240" stroke-width="1.3" fill="none" opacity=".9"/><ellipse cx="72" cy="7" rx="1.3" ry="0.9" fill="#d9a57e"/><ellipse cx="78" cy="4" rx="1.9" ry="1.9" fill="#d9a57e"/><ellipse cx="83" cy="20" rx="2.1" ry="1.5" fill="#c98f68"/><ellipse cx="76" cy="24" rx="1.7" ry="1.8" fill="#d6a070"/><ellipse cx="66" cy="27" rx="1.5" ry="1.0" fill="#e0b08c"/><ellipse cx="114" cy="45" rx="1.0" ry="0.8" fill="#d6a070"/><ellipse cx="102" cy="49" rx="1.4" ry="1.4" fill="#c98f68"/><ellipse cx="99" cy="57" rx="1.8" ry="1.9" fill="#c98f68"/><ellipse cx="123" cy="60" rx="1.6" ry="1.6" fill="#e4bfa0"/><ellipse cx="137" cy="65" rx="1.6" ry="1.7" fill="#c98f68"/><ellipse cx="150" cy="59" rx="1.2" ry="0.9" fill="#c98f68"/><ellipse cx="155" cy="50" rx="1.4" ry="1.5" fill="#d6a070"/><ellipse cx="155" cy="65" rx="1.3" ry="1.3" fill="#c98f68"/><ellipse cx="129" cy="75" rx="1.7" ry="1.3" fill="#d6a070"/><ellipse cx="106" cy="72" rx="1.1" ry="1.1" fill="#e0b08c"/><ellipse cx="101" cy="69" rx="1.9" ry="1.9" fill="#d9a57e"/><ellipse cx="84" cy="74" rx="2.0" ry="1.8" fill="#e0b08c"/><ellipse cx="77" cy="81" rx="1.2" ry="1.1" fill="#c98f68"/><ellipse cx="102" cy="83" rx="2.0" ry="2.1" fill="#e0b08c"/><ellipse cx="109" cy="87" rx="1.0" ry="0.8" fill="#c98f68"/><ellipse cx="114" cy="89" rx="1.9" ry="1.9" fill="#d9a57e"/><ellipse cx="127" cy="91" rx="1.6" ry="1.1" fill="#d6a070"/><ellipse cx="133" cy="88" rx="1.4" ry="1.5" fill="#d6a070"/><ellipse cx="144" cy="86" rx="2.2" ry="2.0" fill="#d9a57e"/><ellipse cx="102" cy="92" rx="1.2" ry="0.9" fill="#d9a57e"/><ellipse cx="80" cy="92" rx="1.6" ry="1.5" fill="#e0b08c"/><ellipse cx="68" cy="99" rx="1.8" ry="1.3" fill="#d9a57e"/><ellipse cx="72" cy="102" rx="2.1" ry="2.2" fill="#d9a57e"/><ellipse cx="81" cy="104" rx="1.1" ry="1.2" fill="#d6a070"/><ellipse cx="111" cy="112" rx="1.6" ry="1.3" fill="#d9a57e"/><ellipse cx="68" cy="121" rx="1.8" ry="1.7" fill="#e0b08c"/><ellipse cx="170" cy="82" rx="1.7" ry="1.5" fill="#d9a57e"/><ellipse cx="174" cy="87" rx="2.0" ry="1.7" fill="#d9a57e"/><ellipse cx="181" cy="83" rx="1.3" ry="1.2" fill="#e0b08c"/><ellipse cx="166" cy="99" rx="1.3" ry="0.9" fill="#e0b08c"/><ellipse cx="208" cy="77" rx="1.3" ry="1.0" fill="#d9a57e"/><ellipse cx="200" cy="78" rx="1.1" ry="1.1" fill="#e4bfa0"/><ellipse cx="363" cy="25" rx="1.3" ry="1.3" fill="#e0aa70"/><ellipse cx="358" cy="22" rx="1.8" ry="1.4" fill="#e6c09a"/><ellipse cx="368" cy="28" rx="1.4" ry="1.5" fill="#c98a50"/><ellipse cx="354" cy="43" rx="2.0" ry="1.8" fill="#e0aa70"/><ellipse cx="356" cy="47" rx="1.4" ry="1.2" fill="#c98a50"/><ellipse cx="349" cy="59" rx="1.2" ry="1.2" fill="#c98a50"/><ellipse cx="351" cy="63" rx="2.0" ry="1.6" fill="#d89a5c"/><ellipse cx="409" cy="67" rx="1.6" ry="1.6" fill="#e0aa70"/><ellipse cx="405" cy="64" rx="1.9" ry="1.9" fill="#cf8f52"/><ellipse cx="413" cy="69" rx="1.8" ry="1.9" fill="#d89a5c"/><ellipse cx="416" cy="78" rx="1.9" ry="1.7" fill="#d89a5c"/><ellipse cx="395" cy="76" rx="1.7" ry="1.5" fill="#c98a50"/><ellipse cx="398" cy="80" rx="1.4" ry="1.0" fill="#e6c09a"/><ellipse cx="429" cy="71" rx="1.9" ry="1.7" fill="#c98a50"/><ellipse cx="433" cy="74" rx="1.7" ry="1.4" fill="#c98a50"/><ellipse cx="439" cy="80" rx="1.8" ry="1.5" fill="#c98a50"/><ellipse cx="443" cy="77" rx="1.1" ry="0.9" fill="#e6c09a"/><ellipse cx="446" cy="77" rx="1.8" ry="1.3" fill="#e0aa70"/><ellipse cx="351" cy="82" rx="2.0" ry="2.1" fill="#cf8f52"/><ellipse cx="369" cy="76" rx="1.9" ry="2.0" fill="#e0aa70"/><ellipse cx="370" cy="81" rx="1.6" ry="1.4" fill="#e0aa70"/><ellipse cx="379" cy="81" rx="1.6" ry="1.7" fill="#cf8f52"/><ellipse cx="441" cy="90" rx="1.1" ry="0.9" fill="#e6c09a"/><ellipse cx="446" cy="105" rx="1.2" ry="1.3" fill="#cf8f52"/><ellipse cx="425" cy="66" rx="1.3" ry="1.0" fill="#cf8f52"/><ellipse cx="421" cy="70" rx="1.8" ry="1.7" fill="#cf8f52"/><ellipse cx="436" cy="82" rx="2.0" ry="1.7" fill="#d89a5c"/><ellipse cx="400" cy="73" rx="1.4" ry="1.1" fill="#c98a50"/><ellipse cx="378" cy="90" rx="1.2" ry="1.0" fill="#e0aa70"/><ellipse cx="392" cy="92" rx="1.4" ry="1.3" fill="#e6c09a"/><ellipse cx="440" cy="100" rx="1.5" ry="1.3" fill="#d89a5c"/><ellipse cx="355" cy="8" rx="1.3" ry="1.3" fill="#c98a50"/><ellipse cx="375" cy="5" rx="1.5" ry="1.5" fill="#c98a50"/><ellipse cx="384" cy="3" rx="1.2" ry="0.9" fill="#e6c09a"/><ellipse cx="345" cy="0" rx="1.8" ry="1.6" fill="#e0aa70"/><circle cx="242" cy="21" r="1.3" fill="#c6452a"/><circle cx="238" cy="31" r="1.3" fill="#c6452a"/><circle cx="301" cy="18" r="1.2" fill="#c6452a"/><circle cx="338" cy="12" r="1.4" fill="#c6452a"/><circle cx="343" cy="13" r="1.1" fill="#c6452a"/><circle cx="289" cy="39" r="1.2" fill="#c6452a"/><circle cx="257" cy="46" r="0.9" fill="#c6452a"/><circle cx="253" cy="57" r="1.1" fill="#c6452a"/><circle cx="265" cy="30" r="1.3" fill="#c6452a"/><circle cx="300" cy="15" r="1.1" fill="#c6452a"/><circle cx="325" cy="6" r="1.2" fill="#c6452a"/><circle cx="305" cy="38" r="1.5" fill="#c6452a"/><circle cx="270" cy="62" r="1.1" fill="#c6452a"/><circle cx="246" cy="36" r="1.1" fill="#c6452a"/><circle cx="262" cy="64" r="1.2" fill="#c6452a"/><circle cx="250" cy="100" r="1.2" fill="#c6452a"/><circle cx="430" cy="10" r="1.2" fill="#c6452a"/><circle cx="456" cy="26" r="1.0" fill="#c6452a"/><circle cx="370" cy="50" r="1.0" fill="#c6452a"/><circle cx="413" cy="37" r="1.5" fill="#c6452a"/><circle cx="403" cy="199" r="1.5" fill="#8a5e34" opacity=".7"/><circle cx="437" cy="143" r="0.8" fill="#8a5e34" opacity=".7"/><circle cx="439" cy="226" r="1.1" fill="#8a5e34" opacity=".7"/><circle cx="428" cy="126" r="1.0" fill="#8a5e34" opacity=".7"/><circle cx="447" cy="108" r="1.3" fill="#8a5e34" opacity=".7"/><circle cx="457" cy="209" r="1.3" fill="#8a5e34" opacity=".7"/><circle cx="385" cy="118" r="1.5" fill="#8a5e34" opacity=".7"/><circle cx="386" cy="152" r="1.1" fill="#8a5e34" opacity=".7"/><circle cx="413" cy="221" r="1.3" fill="#8a5e34" opacity=".7"/><circle cx="443" cy="105" r="1.3" fill="#8a5e34" opacity=".7"/><circle cx="454" cy="188" r="1.1" fill="#8a5e34" opacity=".7"/><circle cx="459" cy="115" r="0.9" fill="#8a5e34" opacity=".7"/><circle cx="411" cy="109" r="1.4" fill="#8a5e34" opacity=".7"/><circle cx="381" cy="123" r="1.0" fill="#8a5e34" opacity=".7"/><circle cx="423" cy="220" r="1.0" fill="#8a5e34" opacity=".7"/><circle cx="406" cy="144" r="1.2" fill="#8a5e34" opacity=".7"/><circle cx="387" cy="209" r="1.3" fill="#8a5e34" opacity=".7"/><circle cx="381" cy="160" r="1.5" fill="#8a5e34" opacity=".7"/><circle cx="397" cy="154" r="1.5" fill="#8a5e34" opacity=".7"/><circle cx="396" cy="137" r="1.5" fill="#8a5e34" opacity=".7"/><circle cx="423" cy="195" r="1.5" fill="#8a5e34" opacity=".7"/><circle cx="391" cy="147" r="0.8" fill="#8a5e34" opacity=".7"/><circle cx="429" cy="135" r="1.0" fill="#8a5e34" opacity=".7"/><circle cx="458" cy="116" r="1.2" fill="#8a5e34" opacity=".7"/><circle cx="421" cy="102" r="1.1" fill="#8a5e34" opacity=".7"/><circle cx="432" cy="132" r="1.1" fill="#8a5e34" opacity=".7"/><circle cx="450" cy="185" r="1.0" fill="#8a5e34" opacity=".7"/><circle cx="400" cy="143" r="1.1" fill="#8a5e34" opacity=".7"/><circle cx="423" cy="133" r="0.9" fill="#8a5e34" opacity=".7"/><circle cx="396" cy="181" r="1.5" fill="#8a5e34" opacity=".7"/><circle cx="432" cy="189" r="0.9" fill="#8a5e34" opacity=".7"/><circle cx="454" cy="138" r="1.2" fill="#8a5e34" opacity=".7"/><circle cx="436" cy="183" r="1.4" fill="#8a5e34" opacity=".7"/><circle cx="381" cy="99" r="1.6" fill="#8a5e34" opacity=".7"/><circle cx="445" cy="95" r="1.0" fill="#8a5e34" opacity=".7"/><circle cx="415" cy="118" r="1.0" fill="#8a5e34" opacity=".7"/><circle cx="457" cy="176" r="1.1" fill="#8a5e34" opacity=".7"/><circle cx="437" cy="119" r="1.0" fill="#8a5e34" opacity=".7"/><circle cx="394" cy="210" r="0.9" fill="#8a5e34" opacity=".7"/><circle cx="391" cy="213" r="1.5" fill="#8a5e34" opacity=".7"/><circle cx="419" cy="92" r="1.4" fill="#8a5e34" opacity=".7"/><circle cx="438" cy="113" r="1.0" fill="#8a5e34" opacity=".7"/><circle cx="437" cy="195" r="1.4" fill="#8a5e34" opacity=".7"/><circle cx="422" cy="112" r="1.4" fill="#8a5e34" opacity=".7"/><circle cx="437" cy="162" r="1.2" fill="#8a5e34" opacity=".7"/><circle cx="396" cy="103" r="0.8" fill="#8a5e34" opacity=".7"/><circle cx="398" cy="207" r="1.4" fill="#8a5e34" opacity=".7"/><circle cx="415" cy="149" r="1.5" fill="#8a5e34" opacity=".7"/><circle cx="453" cy="109" r="0.9" fill="#8a5e34" opacity=".7"/><circle cx="415" cy="196" r="1.5" fill="#8a5e34" opacity=".7"/><circle cx="443" cy="189" r="1.4" fill="#8a5e34" opacity=".7"/><circle cx="404" cy="126" r="1.2" fill="#8a5e34" opacity=".7"/><circle cx="397" cy="222" r="1.3" fill="#8a5e34" opacity=".7"/><circle cx="398" cy="226" r="1.1" fill="#8a5e34" opacity=".7"/><circle cx="392" cy="131" r="1.3" fill="#8a5e34" opacity=".7"/><circle cx="435" cy="118" r="0.9" fill="#8a5e34" opacity=".7"/><circle cx="395" cy="137" r="1.1" fill="#8a5e34" opacity=".7"/><circle cx="383" cy="139" r="1.3" fill="#8a5e34" opacity=".7"/><circle cx="397" cy="182" r="1.2" fill="#8a5e34" opacity=".7"/><circle cx="386" cy="159" r="0.8" fill="#8a5e34" opacity=".7"/><circle cx="442" cy="215" r="1.5" fill="#8a5e34" opacity=".7"/><circle cx="396" cy="129" r="1.0" fill="#8a5e34" opacity=".7"/><circle cx="426" cy="196" r="1.0" fill="#8a5e34" opacity=".7"/><circle cx="417" cy="197" r="1.4" fill="#8a5e34" opacity=".7"/><circle cx="451" cy="171" r="1.0" fill="#8a5e34" opacity=".7"/><circle cx="426" cy="104" r="0.8" fill="#8a5e34" opacity=".7"/><circle cx="395" cy="111" r="1.0" fill="#8a5e34" opacity=".7"/><circle cx="394" cy="139" r="1.2" fill="#8a5e34" opacity=".7"/><circle cx="406" cy="141" r="0.9" fill="#8a5e34" opacity=".7"/><circle cx="446" cy="203" r="1.4" fill="#8a5e34" opacity=".7"/><circle cx="218" cy="221" r="0.9" fill="#6e4e30" opacity=".7"/><circle cx="174" cy="202" r="0.8" fill="#6e4e30" opacity=".7"/><circle cx="156" cy="212" r="1.1" fill="#6e4e30" opacity=".7"/><circle cx="254" cy="203" r="1.4" fill="#6e4e30" opacity=".7"/><circle cx="161" cy="220" r="1.3" fill="#6e4e30" opacity=".7"/><circle cx="204" cy="216" r="0.9" fill="#6e4e30" opacity=".7"/><circle cx="151" cy="215" r="1.4" fill="#6e4e30" opacity=".7"/><circle cx="196" cy="194" r="0.9" fill="#6e4e30" opacity=".7"/><circle cx="186" cy="188" r="1.0" fill="#6e4e30" opacity=".7"/><circle cx="231" cy="198" r="1.0" fill="#6e4e30" opacity=".7"/><circle cx="235" cy="182" r="1.0" fill="#6e4e30" opacity=".7"/><circle cx="292" cy="196" r="1.2" fill="#6e4e30" opacity=".7"/><circle cx="298" cy="230" r="1.3" fill="#6e4e30" opacity=".7"/><circle cx="230" cy="193" r="0.9" fill="#6e4e30" opacity=".7"/><circle cx="166" cy="183" r="1.4" fill="#6e4e30" opacity=".7"/><circle cx="255" cy="192" r="1.3" fill="#6e4e30" opacity=".7"/><circle cx="163" cy="189" r="1.4" fill="#6e4e30" opacity=".7"/><circle cx="300" cy="203" r="1.2" fill="#6e4e30" opacity=".7"/><circle cx="166" cy="211" r="0.9" fill="#6e4e30" opacity=".7"/><circle cx="250" cy="192" r="1.0" fill="#6e4e30" opacity=".7"/><circle cx="266" cy="208" r="1.4" fill="#6e4e30" opacity=".7"/><circle cx="273" cy="184" r="1.0" fill="#6e4e30" opacity=".7"/><circle cx="165" cy="192" r="1.3" fill="#6e4e30" opacity=".7"/><circle cx="176" cy="197" r="0.9" fill="#6e4e30" opacity=".7"/><circle cx="264" cy="213" r="0.9" fill="#6e4e30" opacity=".7"/><circle cx="198" cy="231" r="1.4" fill="#6e4e30" opacity=".7"/><circle cx="155" cy="223" r="0.9" fill="#6e4e30" opacity=".7"/><circle cx="227" cy="189" r="1.4" fill="#6e4e30" opacity=".7"/><circle cx="266" cy="191" r="1.4" fill="#6e4e30" opacity=".7"/><circle cx="253" cy="219" r="0.8" fill="#6e4e30" opacity=".7"/><circle cx="150" cy="228" r="0.8" fill="#6e4e30" opacity=".7"/><circle cx="229" cy="198" r="0.8" fill="#6e4e30" opacity=".7"/><circle cx="241" cy="183" r="1.4" fill="#6e4e30" opacity=".7"/><circle cx="158" cy="200" r="1.1" fill="#6e4e30" opacity=".7"/><circle cx="248" cy="233" r="1.2" fill="#6e4e30" opacity=".7"/><circle cx="271" cy="207" r="1.3" fill="#6e4e30" opacity=".7"/><circle cx="224" cy="194" r="1.3" fill="#6e4e30" opacity=".7"/><circle cx="195" cy="183" r="1.1" fill="#6e4e30" opacity=".7"/><circle cx="268" cy="217" r="0.9" fill="#6e4e30" opacity=".7"/><circle cx="208" cy="215" r="1.5" fill="#6e4e30" opacity=".7"/><path d="M238.3 127.2C239.8 125.5 238.4 123.7 239.4 121.4C240.3 119.1 242.3 116.0 244.0 113.3C245.7 110.6 247.5 108.1 249.8 105.3C252.1 102.5 255.6 97.7 257.9 96.6C260.2 95.5 261.6 99.2 263.5 98.5C265.4 97.8 267.7 94.8 269.5 92.5C271.3 90.2 272.2 85.6 274.1 84.5C276.0 83.4 278.7 85.9 281.0 85.6C283.3 85.3 286.2 83.5 288.0 82.7C289.8 81.9 291.0 82.9 292.0 81.0C293.0 79.1 293.2 72.1 294.1 71.5C295.0 70.9 295.5 76.0 297.2 77.5C298.9 79.0 302.3 80.2 304.1 80.4C305.9 80.6 306.6 79.9 308.2 78.7C309.9 77.5 313.5 72.3 314.0 73.1C314.5 73.9 310.8 80.3 311.1 83.3C311.4 86.4 314.3 88.5 315.7 91.4C317.1 94.3 318.7 97.5 319.7 100.6C320.8 103.7 320.9 107.2 322.0 109.9C323.1 112.6 324.9 114.2 326.1 116.8C327.3 119.4 328.9 123.0 329.3 125.5C329.6 128.0 329.3 130.3 328.2 131.8C327.1 133.3 324.5 134.2 322.6 134.7C320.7 135.2 318.1 135.4 316.8 134.7C315.4 134.0 316.2 132.5 314.5 130.7C312.8 128.9 308.9 125.1 306.4 123.7C303.9 122.2 301.6 122.8 299.5 122.0C297.4 121.2 294.3 118.2 293.7 119.1C293.1 120.0 295.9 124.1 296.0 127.2C296.1 130.3 295.1 134.1 294.3 137.6C293.5 141.1 292.1 144.7 291.4 148.0C290.7 151.3 290.0 154.4 290.3 157.5C290.6 160.6 292.8 163.8 293.1 166.7C293.4 169.6 292.9 172.3 292.0 174.8C291.1 177.3 287.4 179.7 287.9 181.8C288.4 183.9 292.1 185.0 294.8 187.5C297.5 190.0 301.6 193.9 304.1 196.8C306.6 199.7 308.8 202.4 309.9 204.9C311.0 207.4 310.2 208.9 311.0 211.8C311.8 214.7 313.7 219.5 314.5 222.2C315.3 224.9 315.9 225.7 315.6 228.0C315.3 230.3 313.6 233.8 312.8 236.1C312.0 238.4 312.1 240.2 311.0 241.9C309.9 243.6 307.9 247.1 306.4 246.5C304.9 245.9 302.2 240.5 301.8 238.4C301.4 236.3 303.3 235.3 304.1 233.8C304.9 232.3 306.2 231.5 306.4 229.2C306.6 226.9 305.8 223.0 305.2 219.9C304.6 216.8 304.2 213.4 302.9 210.7C301.6 208.0 299.3 205.8 297.2 203.7C295.1 201.6 291.2 197.3 290.2 197.9C289.2 198.5 291.8 204.3 291.4 207.2C291.0 210.1 289.4 212.4 287.9 215.3C286.3 218.2 283.8 221.8 282.1 224.5C280.4 227.2 279.2 230.0 277.5 231.5C275.8 233.0 273.8 232.8 271.7 233.8C269.6 234.7 267.1 236.2 264.8 237.2C262.5 238.2 258.9 240.8 257.9 239.6C256.9 238.5 258.1 232.3 259.0 230.3C259.9 228.3 261.9 228.0 263.6 227.4C265.3 226.8 267.5 227.7 269.4 226.8C271.3 225.9 273.5 224.1 275.2 222.2C276.9 220.3 278.8 217.6 279.8 215.3C280.8 213.0 281.8 210.0 281.0 208.3C280.2 206.6 278.1 206.2 275.2 204.9C272.3 203.6 267.5 201.8 263.6 200.3C259.8 198.7 255.0 197.2 252.1 195.6C249.2 194.1 250.1 191.5 246.3 191.0C242.5 190.5 235.8 192.6 229.5 192.9C223.2 193.2 214.5 193.5 208.7 192.9C202.9 192.3 198.6 191.2 194.8 189.5C190.9 187.8 187.9 184.6 185.6 182.5C183.3 180.4 182.0 175.3 181.0 176.7C180.0 178.0 180.6 186.4 179.8 190.6C179.0 194.9 177.2 198.7 176.4 202.2C175.6 205.7 174.4 209.1 175.2 211.4C176.0 213.7 178.5 214.1 181.0 216.0C183.5 217.9 187.3 220.9 190.2 223.0C193.1 225.1 196.0 226.7 198.3 228.8C200.6 230.9 202.7 233.6 204.1 235.7C205.6 237.8 206.3 239.3 207.0 241.5C207.7 243.7 209.4 248.0 208.1 249.0C206.9 250.0 201.5 248.4 199.5 247.2C197.5 246.0 196.4 243.7 196.0 242.0C195.6 240.3 198.2 238.2 197.2 236.8C196.2 235.4 192.9 235.1 190.2 233.4C187.5 231.7 183.9 228.3 181.0 226.4C178.1 224.5 174.2 221.2 172.9 221.8C171.5 222.4 172.1 226.6 172.9 229.9C173.7 233.2 175.8 237.7 177.5 241.5C179.2 245.3 181.0 250.1 183.3 253.0C185.6 255.9 192.7 258.8 191.4 258.8C190.0 258.8 178.7 255.5 175.2 253.0C171.7 250.5 172.3 247.3 170.6 243.8C168.9 240.3 166.7 235.9 164.8 232.2C162.9 228.5 159.9 224.9 159.0 221.8C158.1 218.7 159.0 217.0 159.6 213.7C160.2 210.4 162.8 206.1 162.5 202.2C162.2 198.4 160.2 194.3 157.9 190.6C155.6 186.9 152.1 183.5 148.6 180.2C145.1 176.9 140.7 171.2 137.1 171.0C133.5 170.8 130.4 176.3 127.2 179.2C124.0 182.1 120.8 185.9 117.9 188.4C115.0 190.9 112.1 194.8 109.8 194.2C107.5 193.6 106.3 185.9 104.0 184.9C101.7 183.9 98.2 186.7 95.9 188.4C93.6 190.1 92.5 193.2 90.2 195.3C87.9 197.4 84.9 199.2 82.1 201.1C79.3 203.0 75.7 207.3 73.4 206.9C71.1 206.5 69.1 201.5 68.2 198.8C67.3 196.1 69.0 193.0 68.2 190.7C67.4 188.4 63.4 187.2 63.6 184.9C63.8 182.6 67.2 177.6 69.4 176.8C71.6 176.0 75.4 181.1 76.9 180.3C78.4 179.5 77.6 174.9 78.6 172.2C79.7 169.5 81.5 167.2 83.2 164.1C84.9 161.0 86.9 156.6 89.0 153.7C91.1 150.8 93.0 148.7 95.9 146.8C98.8 144.9 102.8 143.9 106.3 142.2C109.8 140.5 113.3 137.5 116.8 136.4C120.3 135.3 123.9 135.3 127.2 135.8C130.5 136.3 132.9 139.7 136.4 139.3C139.9 138.9 143.4 135.3 148.0 133.5C152.6 131.7 158.3 129.2 164.1 128.3C169.9 127.4 175.7 127.5 182.6 128.1C189.5 128.7 197.6 131.3 205.5 131.8C213.4 132.3 224.7 132.1 230.2 131.3C235.7 130.5 236.8 128.8 238.3 127.2Z" fill="url(#grn)"/><g clip-path="url(#hcl)"><g filter="url(#pb2)"><ellipse cx="220.5" cy="188.5" rx="38" ry="7" fill="#70c377"/><ellipse cx="215.5" cy="147.5" rx="60" ry="13" fill="#93df94"/><path d="M176.5 192.5l-14 25l12 30l16 12l-8-30z" fill="#6bbd70"/><path d="M297.5 202.5l10 18l6 20l-8 6z" fill="#70c276"/></g><path d="M136.4 139.3C135.5 136.0 130.5 136.3 127.2 135.8C123.9 135.3 120.3 135.3 116.8 136.4C113.3 137.5 109.8 140.5 106.3 142.2C102.8 143.9 98.8 144.9 95.9 146.8C93.0 148.7 91.1 150.8 89.0 153.7C86.9 156.6 84.9 161.0 83.2 164.1C81.5 167.2 79.7 169.5 78.6 172.2C77.6 174.9 78.4 179.5 76.9 180.3C75.4 181.1 71.6 176.0 69.4 176.8C67.2 177.6 63.8 182.6 63.6 184.9C63.4 187.2 67.4 188.4 68.2 190.7C69.0 193.0 67.3 196.1 68.2 198.8C69.1 201.5 71.1 206.5 73.4 206.9C75.7 207.3 79.3 203.0 82.1 201.1C84.9 199.2 87.9 197.4 90.2 195.3C92.5 193.2 93.6 190.1 95.9 188.4C98.2 186.7 101.7 183.9 104.0 184.9C106.3 185.9 107.5 193.6 109.8 194.2C112.1 194.8 115.0 190.9 117.9 188.4C120.8 185.9 124.0 182.1 127.2 179.2C130.4 176.3 136.2 174.9 137.1 171.0C138.0 167.1 132.6 160.8 132.5 155.5C132.4 150.2 137.3 142.6 136.4 139.3Z" fill="url(#tailgl)"/><path d="M133.0 143.5c-2.2 4-2.6 10-1.2 16" stroke="#2f7a2e" stroke-width="2.2" fill="none"/><path d="M292.0 84.0C288.5 89.5 289.5 97.5 293.0 105.0L307.5 116.0L321.0 110.0M293.0 105.0C290.5 109.5 291.0 115.5 293.5 118.5M307.5 116.0L305.5 122.0" fill="none" stroke="#1d5a24" stroke-width="1.7" stroke-linecap="round"/><ellipse cx="307.29999999999995" cy="98.80000000000001" rx="2.6" ry="1.9" fill="#1d5a24"/><path d="M196.0 242.5l4 5l8.6 2l-1.4-7.6z" fill="#128418"/><path d="M301.5 238.10000000000002l4.6-6l6 8l-5.6 6.8z" fill="#1c8a22"/><ellipse cx="324.0" cy="128.5" rx="2.4" ry="3.2" fill="#f4f03a"/></g><path d="M238.3 127.2C239.8 125.5 238.4 123.7 239.4 121.4C240.3 119.1 242.3 116.0 244.0 113.3C245.7 110.6 247.5 108.1 249.8 105.3C252.1 102.5 255.6 97.7 257.9 96.6C260.2 95.5 261.6 99.2 263.5 98.5C265.4 97.8 267.7 94.8 269.5 92.5C271.3 90.2 272.2 85.6 274.1 84.5C276.0 83.4 278.7 85.9 281.0 85.6C283.3 85.3 286.2 83.5 288.0 82.7C289.8 81.9 291.0 82.9 292.0 81.0C293.0 79.1 293.2 72.1 294.1 71.5C295.0 70.9 295.5 76.0 297.2 77.5C298.9 79.0 302.3 80.2 304.1 80.4C305.9 80.6 306.6 79.9 308.2 78.7C309.9 77.5 313.5 72.3 314.0 73.1C314.5 73.9 310.8 80.3 311.1 83.3C311.4 86.4 314.3 88.5 315.7 91.4C317.1 94.3 318.7 97.5 319.7 100.6C320.8 103.7 320.9 107.2 322.0 109.9C323.1 112.6 324.9 114.2 326.1 116.8C327.3 119.4 328.9 123.0 329.3 125.5C329.6 128.0 329.3 130.3 328.2 131.8C327.1 133.3 324.5 134.2 322.6 134.7C320.7 135.2 318.1 135.4 316.8 134.7C315.4 134.0 316.2 132.5 314.5 130.7C312.8 128.9 308.9 125.1 306.4 123.7C303.9 122.2 301.6 122.8 299.5 122.0C297.4 121.2 294.3 118.2 293.7 119.1C293.1 120.0 295.9 124.1 296.0 127.2C296.1 130.3 295.1 134.1 294.3 137.6C293.5 141.1 292.1 144.7 291.4 148.0C290.7 151.3 290.0 154.4 290.3 157.5C290.6 160.6 292.8 163.8 293.1 166.7C293.4 169.6 292.9 172.3 292.0 174.8C291.1 177.3 287.4 179.7 287.9 181.8C288.4 183.9 292.1 185.0 294.8 187.5C297.5 190.0 301.6 193.9 304.1 196.8C306.6 199.7 308.8 202.4 309.9 204.9C311.0 207.4 310.2 208.9 311.0 211.8C311.8 214.7 313.7 219.5 314.5 222.2C315.3 224.9 315.9 225.7 315.6 228.0C315.3 230.3 313.6 233.8 312.8 236.1C312.0 238.4 312.1 240.2 311.0 241.9C309.9 243.6 307.9 247.1 306.4 246.5C304.9 245.9 302.2 240.5 301.8 238.4C301.4 236.3 303.3 235.3 304.1 233.8C304.9 232.3 306.2 231.5 306.4 229.2C306.6 226.9 305.8 223.0 305.2 219.9C304.6 216.8 304.2 213.4 302.9 210.7C301.6 208.0 299.3 205.8 297.2 203.7C295.1 201.6 291.2 197.3 290.2 197.9C289.2 198.5 291.8 204.3 291.4 207.2C291.0 210.1 289.4 212.4 287.9 215.3C286.3 218.2 283.8 221.8 282.1 224.5C280.4 227.2 279.2 230.0 277.5 231.5C275.8 233.0 273.8 232.8 271.7 233.8C269.6 234.7 267.1 236.2 264.8 237.2C262.5 238.2 258.9 240.8 257.9 239.6C256.9 238.5 258.1 232.3 259.0 230.3C259.9 228.3 261.9 228.0 263.6 227.4C265.3 226.8 267.5 227.7 269.4 226.8C271.3 225.9 273.5 224.1 275.2 222.2C276.9 220.3 278.8 217.6 279.8 215.3C280.8 213.0 281.8 210.0 281.0 208.3C280.2 206.6 278.1 206.2 275.2 204.9C272.3 203.6 267.5 201.8 263.6 200.3C259.8 198.7 255.0 197.2 252.1 195.6C249.2 194.1 250.1 191.5 246.3 191.0C242.5 190.5 235.8 192.6 229.5 192.9C223.2 193.2 214.5 193.5 208.7 192.9C202.9 192.3 198.6 191.2 194.8 189.5C190.9 187.8 187.9 184.6 185.6 182.5C183.3 180.4 182.0 175.3 181.0 176.7C180.0 178.0 180.6 186.4 179.8 190.6C179.0 194.9 177.2 198.7 176.4 202.2C175.6 205.7 174.4 209.1 175.2 211.4C176.0 213.7 178.5 214.1 181.0 216.0C183.5 217.9 187.3 220.9 190.2 223.0C193.1 225.1 196.0 226.7 198.3 228.8C200.6 230.9 202.7 233.6 204.1 235.7C205.6 237.8 206.3 239.3 207.0 241.5C207.7 243.7 209.4 248.0 208.1 249.0C206.9 250.0 201.5 248.4 199.5 247.2C197.5 246.0 196.4 243.7 196.0 242.0C195.6 240.3 198.2 238.2 197.2 236.8C196.2 235.4 192.9 235.1 190.2 233.4C187.5 231.7 183.9 228.3 181.0 226.4C178.1 224.5 174.2 221.2 172.9 221.8C171.5 222.4 172.1 226.6 172.9 229.9C173.7 233.2 175.8 237.7 177.5 241.5C179.2 245.3 181.0 250.1 183.3 253.0C185.6 255.9 192.7 258.8 191.4 258.8C190.0 258.8 178.7 255.5 175.2 253.0C171.7 250.5 172.3 247.3 170.6 243.8C168.9 240.3 166.7 235.9 164.8 232.2C162.9 228.5 159.9 224.9 159.0 221.8C158.1 218.7 159.0 217.0 159.6 213.7C160.2 210.4 162.8 206.1 162.5 202.2C162.2 198.4 160.2 194.3 157.9 190.6C155.6 186.9 152.1 183.5 148.6 180.2C145.1 176.9 140.7 171.2 137.1 171.0C133.5 170.8 130.4 176.3 127.2 179.2C124.0 182.1 120.8 185.9 117.9 188.4C115.0 190.9 112.1 194.8 109.8 194.2C107.5 193.6 106.3 185.9 104.0 184.9C101.7 183.9 98.2 186.7 95.9 188.4C93.6 190.1 92.5 193.2 90.2 195.3C87.9 197.4 84.9 199.2 82.1 201.1C79.3 203.0 75.7 207.3 73.4 206.9C71.1 206.5 69.1 201.5 68.2 198.8C67.3 196.1 69.0 193.0 68.2 190.7C67.4 188.4 63.4 187.2 63.6 184.9C63.8 182.6 67.2 177.6 69.4 176.8C71.6 176.0 75.4 181.1 76.9 180.3C78.4 179.5 77.6 174.9 78.6 172.2C79.7 169.5 81.5 167.2 83.2 164.1C84.9 161.0 86.9 156.6 89.0 153.7C91.1 150.8 93.0 148.7 95.9 146.8C98.8 144.9 102.8 143.9 106.3 142.2C109.8 140.5 113.3 137.5 116.8 136.4C120.3 135.3 123.9 135.3 127.2 135.8C130.5 136.3 132.9 139.7 136.4 139.3C139.9 138.9 143.4 135.3 148.0 133.5C152.6 131.7 158.3 129.2 164.1 128.3C169.9 127.4 175.7 127.5 182.6 128.1C189.5 128.7 197.6 131.3 205.5 131.8C213.4 132.3 224.7 132.1 230.2 131.3C235.7 130.5 236.8 128.8 238.3 127.2Z" fill="none" stroke="#fdfd08" stroke-width="3.2" stroke-linejoin="round"/></svg>
<svg style="left:564px;top:88px" width="459" height="773" viewBox="564 88 459 773"><defs><pattern id="chk" x="564.2" y="320.7" width="92.6" height="92.6" patternUnits="userSpaceOnUse"><rect width="92.6" height="92.6" fill="#fff"/><rect width="46.3" height="46.3" fill="#f5f5f5"/><rect x="46.3" y="46.3" width="46.3" height="46.3" fill="#f5f5f5"/></pattern><linearGradient id="tailg" gradientUnits="userSpaceOnUse" x1="672" y1="452" x2="652" y2="530"><stop offset="0" stop-color="#e9e6e8"/><stop offset="0.22" stop-color="#e2d3cb"/><stop offset="0.5" stop-color="#cfa37c"/><stop offset="0.8" stop-color="#cb9866"/><stop offset="1" stop-color="#d9b48a"/></linearGradient><linearGradient id="bodyg" gradientUnits="userSpaceOnUse" x1="0" y1="400" x2="0" y2="580"><stop offset="0" stop-color="#e0e2e8"/><stop offset="0.45" stop-color="#d6d9e0"/><stop offset="0.62" stop-color="#bfc3cc"/><stop offset="1" stop-color="#adb1bb"/></linearGradient><clipPath id="hc"><path d="M802.8 449.7C804.3 448.0 802.9 446.2 803.9 443.9C804.9 441.6 806.8 438.5 808.5 435.8C810.2 433.1 812.0 430.6 814.3 427.8C816.6 425.0 820.1 420.2 822.4 419.1C824.7 418.0 826.1 421.7 828.0 421.0C829.9 420.3 832.2 417.3 834.0 415.0C835.8 412.7 836.7 408.1 838.6 407.0C840.5 405.9 843.2 408.4 845.5 408.1C847.8 407.8 850.7 406.0 852.5 405.2C854.3 404.4 855.5 405.4 856.5 403.5C857.5 401.6 857.7 394.6 858.6 394.0C859.5 393.4 860.0 398.5 861.7 400.0C863.4 401.5 866.8 402.7 868.6 402.9C870.4 403.1 871.1 402.4 872.7 401.2C874.4 400.0 878.0 394.8 878.5 395.6C879.0 396.4 875.3 402.8 875.6 405.8C875.9 408.9 878.8 411.0 880.2 413.9C881.6 416.8 883.2 420.0 884.2 423.1C885.2 426.2 885.4 429.7 886.5 432.4C887.6 435.1 889.4 436.7 890.6 439.3C891.8 441.9 893.4 445.5 893.8 448.0C894.1 450.5 893.8 452.8 892.7 454.3C891.6 455.8 889.0 456.7 887.1 457.2C885.2 457.7 882.6 457.9 881.3 457.2C879.9 456.5 880.7 455.0 879.0 453.2C877.3 451.4 873.4 447.6 870.9 446.2C868.4 444.8 866.1 445.3 864.0 444.5C861.9 443.7 858.8 440.7 858.2 441.6C857.6 442.5 860.4 446.6 860.5 449.7C860.6 452.8 859.6 456.6 858.8 460.1C858.0 463.6 856.6 467.2 855.9 470.5C855.2 473.8 854.5 476.9 854.8 480.0C855.1 483.1 857.3 486.3 857.6 489.2C857.9 492.1 857.4 494.8 856.5 497.3C855.6 499.8 851.9 502.2 852.4 504.3C852.9 506.4 856.6 507.5 859.3 510.0C862.0 512.5 866.1 516.4 868.6 519.3C871.1 522.2 873.2 524.9 874.4 527.4C875.5 529.9 874.7 531.4 875.5 534.3C876.3 537.2 878.2 542.0 879.0 544.7C879.8 547.4 880.4 548.2 880.1 550.5C879.8 552.8 878.1 556.3 877.3 558.6C876.5 560.9 876.6 562.7 875.5 564.4C874.4 566.1 872.4 569.6 870.9 569.0C869.4 568.4 866.7 563.0 866.3 560.9C865.9 558.8 867.8 557.8 868.6 556.3C869.4 554.8 870.7 554.0 870.9 551.7C871.1 549.4 870.3 545.5 869.7 542.4C869.1 539.3 868.7 535.9 867.4 533.2C866.1 530.5 863.8 528.3 861.7 526.2C859.6 524.1 855.7 519.8 854.7 520.4C853.7 521.0 856.3 526.8 855.9 529.7C855.5 532.6 853.9 534.9 852.4 537.8C850.9 540.7 848.3 544.3 846.6 547.0C844.9 549.7 843.7 552.5 842.0 554.0C840.3 555.5 838.3 555.3 836.2 556.3C834.1 557.2 831.6 558.7 829.3 559.7C827.0 560.7 823.4 563.2 822.4 562.1C821.4 561.0 822.5 554.8 823.5 552.8C824.5 550.8 826.4 550.5 828.1 549.9C829.8 549.3 832.0 550.2 833.9 549.3C835.8 548.4 838.0 546.6 839.7 544.7C841.4 542.8 843.3 540.1 844.3 537.8C845.3 535.5 846.3 532.5 845.5 530.8C844.7 529.1 842.6 528.7 839.7 527.4C836.8 526.1 832.0 524.3 828.1 522.8C824.2 521.2 819.5 519.6 816.6 518.1C813.7 516.6 814.6 514.0 810.8 513.5C807.0 513.0 800.3 515.1 794.0 515.4C787.7 515.7 779.0 516.0 773.2 515.4C767.4 514.8 763.1 513.7 759.3 512.0C755.4 510.3 752.4 507.1 750.1 505.0C747.8 502.9 746.5 497.8 745.5 499.2C744.5 500.6 745.1 508.9 744.3 513.1C743.5 517.4 741.7 521.2 740.9 524.7C740.1 528.2 738.9 531.6 739.7 533.9C740.5 536.2 743.0 536.6 745.5 538.5C748.0 540.4 751.8 543.4 754.7 545.5C757.6 547.6 760.5 549.2 762.8 551.3C765.1 553.4 767.1 556.1 768.6 558.2C770.1 560.3 770.8 561.8 771.5 564.0C772.2 566.2 773.9 570.5 772.6 571.5C771.4 572.5 766.0 570.9 764.0 569.7C762.0 568.5 760.9 566.2 760.5 564.5C760.1 562.8 762.7 560.7 761.7 559.3C760.7 557.9 757.4 557.6 754.7 555.9C752.0 554.2 748.4 550.8 745.5 548.9C742.6 547.0 738.8 543.7 737.4 544.3C736.0 544.9 736.6 549.1 737.4 552.4C738.2 555.7 740.3 560.1 742.0 564.0C743.7 567.9 745.5 572.6 747.8 575.5C750.1 578.4 757.2 581.3 755.9 581.3C754.5 581.3 743.2 578.0 739.7 575.5C736.2 573.0 736.8 569.8 735.1 566.3C733.4 562.8 731.2 558.4 729.3 554.7C727.4 551.0 724.4 547.4 723.5 544.3C722.6 541.2 723.5 539.5 724.1 536.2C724.7 532.9 727.3 528.6 727.0 524.7C726.7 520.9 724.7 516.8 722.4 513.1C720.1 509.4 716.6 506.0 713.1 502.7C709.6 499.4 705.2 493.7 701.6 493.5C698.0 493.3 694.9 498.8 691.7 501.7C688.5 504.6 685.3 508.4 682.4 510.9C679.5 513.4 676.6 517.3 674.3 516.7C672.0 516.1 670.8 508.4 668.5 507.4C666.2 506.4 662.7 509.2 660.4 510.9C658.1 512.6 657.0 515.7 654.7 517.8C652.4 519.9 649.4 521.7 646.6 523.6C643.8 525.5 640.2 529.8 637.9 529.4C635.6 529.0 633.6 524.0 632.7 521.3C631.8 518.6 633.5 515.5 632.7 513.2C631.9 510.9 627.9 509.7 628.1 507.4C628.3 505.1 631.7 500.1 633.9 499.3C636.1 498.5 639.9 503.6 641.4 502.8C642.9 502.0 642.0 497.4 643.1 494.7C644.2 492.0 646.0 489.7 647.7 486.6C649.4 483.5 651.4 479.1 653.5 476.2C655.6 473.3 657.5 471.2 660.4 469.3C663.3 467.4 667.3 466.4 670.8 464.7C674.3 463.0 677.8 460.0 681.3 458.9C684.8 457.8 688.4 457.8 691.7 458.3C695.0 458.8 697.4 462.2 700.9 461.8C704.4 461.4 707.9 457.8 712.5 456.0C717.1 454.2 722.8 451.7 728.6 450.8C734.4 449.9 740.2 450.0 747.1 450.6C754.0 451.2 762.1 453.8 770.0 454.3C777.9 454.8 789.2 454.6 794.7 453.8C800.2 453.0 801.3 451.4 802.8 449.7Z"/></clipPath><filter id="b3" color-interpolation-filters="sRGB" x="-20%" y="-20%" width="140%" height="140%"><feGaussianBlur stdDeviation="3"/></filter><filter id="fur" color-interpolation-filters="sRGB" x="0" y="0" width="100%" height="100%"><feTurbulence type="fractalNoise" baseFrequency="0.28" numOctaves="3" seed="4"/><feColorMatrix type="matrix" values="0 0 0 0 0.45  0 0 0 0 0.47  0 0 0 0 0.53  0.45 0.45 0 0 -0.36"/></filter><clipPath id="cv"><rect x="564" y="88" width="459" height="773"/></clipPath></defs><g clip-path="url(#cv)"><rect x="564.2" y="320.2" width="458.6" height="308.4" fill="#000"/><rect x="565.7" y="322.9" width="455" height="303.2" fill="url(#chk)"/><path d="M802.8 449.7C804.3 448.0 802.9 446.2 803.9 443.9C804.9 441.6 806.8 438.5 808.5 435.8C810.2 433.1 812.0 430.6 814.3 427.8C816.6 425.0 820.1 420.2 822.4 419.1C824.7 418.0 826.1 421.7 828.0 421.0C829.9 420.3 832.2 417.3 834.0 415.0C835.8 412.7 836.7 408.1 838.6 407.0C840.5 405.9 843.2 408.4 845.5 408.1C847.8 407.8 850.7 406.0 852.5 405.2C854.3 404.4 855.5 405.4 856.5 403.5C857.5 401.6 857.7 394.6 858.6 394.0C859.5 393.4 860.0 398.5 861.7 400.0C863.4 401.5 866.8 402.7 868.6 402.9C870.4 403.1 871.1 402.4 872.7 401.2C874.4 400.0 878.0 394.8 878.5 395.6C879.0 396.4 875.3 402.8 875.6 405.8C875.9 408.9 878.8 411.0 880.2 413.9C881.6 416.8 883.2 420.0 884.2 423.1C885.2 426.2 885.4 429.7 886.5 432.4C887.6 435.1 889.4 436.7 890.6 439.3C891.8 441.9 893.4 445.5 893.8 448.0C894.1 450.5 893.8 452.8 892.7 454.3C891.6 455.8 889.0 456.7 887.1 457.2C885.2 457.7 882.6 457.9 881.3 457.2C879.9 456.5 880.7 455.0 879.0 453.2C877.3 451.4 873.4 447.6 870.9 446.2C868.4 444.8 866.1 445.3 864.0 444.5C861.9 443.7 858.8 440.7 858.2 441.6C857.6 442.5 860.4 446.6 860.5 449.7C860.6 452.8 859.6 456.6 858.8 460.1C858.0 463.6 856.6 467.2 855.9 470.5C855.2 473.8 854.5 476.9 854.8 480.0C855.1 483.1 857.3 486.3 857.6 489.2C857.9 492.1 857.4 494.8 856.5 497.3C855.6 499.8 851.9 502.2 852.4 504.3C852.9 506.4 856.6 507.5 859.3 510.0C862.0 512.5 866.1 516.4 868.6 519.3C871.1 522.2 873.2 524.9 874.4 527.4C875.5 529.9 874.7 531.4 875.5 534.3C876.3 537.2 878.2 542.0 879.0 544.7C879.8 547.4 880.4 548.2 880.1 550.5C879.8 552.8 878.1 556.3 877.3 558.6C876.5 560.9 876.6 562.7 875.5 564.4C874.4 566.1 872.4 569.6 870.9 569.0C869.4 568.4 866.7 563.0 866.3 560.9C865.9 558.8 867.8 557.8 868.6 556.3C869.4 554.8 870.7 554.0 870.9 551.7C871.1 549.4 870.3 545.5 869.7 542.4C869.1 539.3 868.7 535.9 867.4 533.2C866.1 530.5 863.8 528.3 861.7 526.2C859.6 524.1 855.7 519.8 854.7 520.4C853.7 521.0 856.3 526.8 855.9 529.7C855.5 532.6 853.9 534.9 852.4 537.8C850.9 540.7 848.3 544.3 846.6 547.0C844.9 549.7 843.7 552.5 842.0 554.0C840.3 555.5 838.3 555.3 836.2 556.3C834.1 557.2 831.6 558.7 829.3 559.7C827.0 560.7 823.4 563.2 822.4 562.1C821.4 561.0 822.5 554.8 823.5 552.8C824.5 550.8 826.4 550.5 828.1 549.9C829.8 549.3 832.0 550.2 833.9 549.3C835.8 548.4 838.0 546.6 839.7 544.7C841.4 542.8 843.3 540.1 844.3 537.8C845.3 535.5 846.3 532.5 845.5 530.8C844.7 529.1 842.6 528.7 839.7 527.4C836.8 526.1 832.0 524.3 828.1 522.8C824.2 521.2 819.5 519.6 816.6 518.1C813.7 516.6 814.6 514.0 810.8 513.5C807.0 513.0 800.3 515.1 794.0 515.4C787.7 515.7 779.0 516.0 773.2 515.4C767.4 514.8 763.1 513.7 759.3 512.0C755.4 510.3 752.4 507.1 750.1 505.0C747.8 502.9 746.5 497.8 745.5 499.2C744.5 500.6 745.1 508.9 744.3 513.1C743.5 517.4 741.7 521.2 740.9 524.7C740.1 528.2 738.9 531.6 739.7 533.9C740.5 536.2 743.0 536.6 745.5 538.5C748.0 540.4 751.8 543.4 754.7 545.5C757.6 547.6 760.5 549.2 762.8 551.3C765.1 553.4 767.1 556.1 768.6 558.2C770.1 560.3 770.8 561.8 771.5 564.0C772.2 566.2 773.9 570.5 772.6 571.5C771.4 572.5 766.0 570.9 764.0 569.7C762.0 568.5 760.9 566.2 760.5 564.5C760.1 562.8 762.7 560.7 761.7 559.3C760.7 557.9 757.4 557.6 754.7 555.9C752.0 554.2 748.4 550.8 745.5 548.9C742.6 547.0 738.8 543.7 737.4 544.3C736.0 544.9 736.6 549.1 737.4 552.4C738.2 555.7 740.3 560.1 742.0 564.0C743.7 567.9 745.5 572.6 747.8 575.5C750.1 578.4 757.2 581.3 755.9 581.3C754.5 581.3 743.2 578.0 739.7 575.5C736.2 573.0 736.8 569.8 735.1 566.3C733.4 562.8 731.2 558.4 729.3 554.7C727.4 551.0 724.4 547.4 723.5 544.3C722.6 541.2 723.5 539.5 724.1 536.2C724.7 532.9 727.3 528.6 727.0 524.7C726.7 520.9 724.7 516.8 722.4 513.1C720.1 509.4 716.6 506.0 713.1 502.7C709.6 499.4 705.2 493.7 701.6 493.5C698.0 493.3 694.9 498.8 691.7 501.7C688.5 504.6 685.3 508.4 682.4 510.9C679.5 513.4 676.6 517.3 674.3 516.7C672.0 516.1 670.8 508.4 668.5 507.4C666.2 506.4 662.7 509.2 660.4 510.9C658.1 512.6 657.0 515.7 654.7 517.8C652.4 519.9 649.4 521.7 646.6 523.6C643.8 525.5 640.2 529.8 637.9 529.4C635.6 529.0 633.6 524.0 632.7 521.3C631.8 518.6 633.5 515.5 632.7 513.2C631.9 510.9 627.9 509.7 628.1 507.4C628.3 505.1 631.7 500.1 633.9 499.3C636.1 498.5 639.9 503.6 641.4 502.8C642.9 502.0 642.0 497.4 643.1 494.7C644.2 492.0 646.0 489.7 647.7 486.6C649.4 483.5 651.4 479.1 653.5 476.2C655.6 473.3 657.5 471.2 660.4 469.3C663.3 467.4 667.3 466.4 670.8 464.7C674.3 463.0 677.8 460.0 681.3 458.9C684.8 457.8 688.4 457.8 691.7 458.3C695.0 458.8 697.4 462.2 700.9 461.8C704.4 461.4 707.9 457.8 712.5 456.0C717.1 454.2 722.8 451.7 728.6 450.8C734.4 449.9 740.2 450.0 747.1 450.6C754.0 451.2 762.1 453.8 770.0 454.3C777.9 454.8 789.2 454.6 794.7 453.8C800.2 453.0 801.3 451.4 802.8 449.7Z" fill="url(#bodyg)"/><g clip-path="url(#hc)"><g filter="url(#b3)"><ellipse cx="780" cy="470" rx="60" ry="14" fill="#e3e5ea"/><ellipse cx="835" cy="455" rx="14" ry="30" fill="#e5e7eb" transform="rotate(25 835 455)"/><ellipse cx="785" cy="510" rx="38" ry="7" fill="#a9adb8"/><ellipse cx="848" cy="495" rx="5" ry="14" fill="#b9bdc7"/><path d="M885 445l9 4l-2 8l-12 1z" fill="#9a9ca6"/><path d="M741 515l-14 25l12 30l16 12l-8-30z" fill="#a7a5ab"/><path d="M745 538l18 14l8 10l-10 2l-20-16z" fill="#a9afba"/><path d="M862 525l10 18l6 20l-8 6z" fill="#b4b5bd"/></g><rect x="620" y="385" width="290" height="205" filter="url(#fur)"/><clipPath id="tc"><path d="M700.9 461.8C700.0 458.5 695.0 458.8 691.7 458.3C688.4 457.8 684.8 457.8 681.3 458.9C677.8 460.0 674.3 463.0 670.8 464.7C667.3 466.4 663.3 467.4 660.4 469.3C657.5 471.2 655.6 473.3 653.5 476.2C651.4 479.1 649.4 483.5 647.7 486.6C646.0 489.7 644.2 492.0 643.1 494.7C642.0 497.4 642.9 502.0 641.4 502.8C639.9 503.6 636.1 498.5 633.9 499.3C631.7 500.1 628.3 505.1 628.1 507.4C627.9 509.7 631.9 510.9 632.7 513.2C633.5 515.5 631.8 518.6 632.7 521.3C633.6 524.0 635.6 529.0 637.9 529.4C640.2 529.8 643.8 525.5 646.6 523.6C649.4 521.7 652.4 519.9 654.7 517.8C657.0 515.7 658.1 512.6 660.4 510.9C662.7 509.2 666.2 506.4 668.5 507.4C670.8 508.4 672.0 516.1 674.3 516.7C676.6 517.3 679.5 513.4 682.4 510.9C685.3 508.4 688.5 504.6 691.7 501.7C694.9 498.8 700.7 497.4 701.6 493.5C702.5 489.6 697.1 483.3 697.0 478.0C696.9 472.7 701.8 465.1 700.9 461.8Z"/></clipPath><path d="M700.9 461.8C700.0 458.5 695.0 458.8 691.7 458.3C688.4 457.8 684.8 457.8 681.3 458.9C677.8 460.0 674.3 463.0 670.8 464.7C667.3 466.4 663.3 467.4 660.4 469.3C657.5 471.2 655.6 473.3 653.5 476.2C651.4 479.1 649.4 483.5 647.7 486.6C646.0 489.7 644.2 492.0 643.1 494.7C642.0 497.4 642.9 502.0 641.4 502.8C639.9 503.6 636.1 498.5 633.9 499.3C631.7 500.1 628.3 505.1 628.1 507.4C627.9 509.7 631.9 510.9 632.7 513.2C633.5 515.5 631.8 518.6 632.7 521.3C633.6 524.0 635.6 529.0 637.9 529.4C640.2 529.8 643.8 525.5 646.6 523.6C649.4 521.7 652.4 519.9 654.7 517.8C657.0 515.7 658.1 512.6 660.4 510.9C662.7 509.2 666.2 506.4 668.5 507.4C670.8 508.4 672.0 516.1 674.3 516.7C676.6 517.3 679.5 513.4 682.4 510.9C685.3 508.4 688.5 504.6 691.7 501.7C694.9 498.8 700.7 497.4 701.6 493.5C702.5 489.6 697.1 483.3 697.0 478.0C696.9 472.7 701.8 465.1 700.9 461.8Z" fill="url(#tailg)"/><g clip-path="url(#tc)" fill="none" stroke-linecap="round"><path d="M694 459C672 462 652 478 644 498C641 506 636 512 630 516" stroke="#f1ebe8" stroke-width="5" opacity=".85"/><path d="M696 466C676 470 660 484 652 502C648 512 642 520 636 527" stroke="#e8d6c6" stroke-width="3" opacity=".8"/><path d="M698 476C682 480 668 494 660 508C654 518 646 524 640 528" stroke="#c28a58" stroke-width="4" opacity=".7"/><path d="M699 486C688 490 678 500 672 512" stroke="#b9865a" stroke-width="3" opacity=".6"/><path d="M700 494C692 498 684 506 676 515" stroke="#dcc8b8" stroke-width="2.5" opacity=".8"/><path d="M690 470C676 476 664 490 656 506" stroke="#d9b594" stroke-width="2" opacity=".8"/></g><path d="M697.5 466c-2.2 4-2.6 10-1.2 16" stroke="#151820" stroke-width="2.2" fill="none"/><path d="M804 447l6-12l7-9l7-7l5 1l6-6l4-8l7 1l8-3l-3 6l-12 6l-12 12l-10 13z" fill="#9c9fae" opacity=".75"/><path d="M760.5 565l4 5l8.6 2l-1.4-7.6z" fill="#0e0e12"/><path d="M823 552.6l5-2.6l2 8.5l-7.6 4z" fill="#2a2426"/><path d="M866 560.6l4.6-6l6 8l-5.6 6.8z" fill="#1a181c"/><path d="M856.5 406.5C853.0 412.0 854.0 420.0 857.5 427.5L872.0 438.5L885.5 432.5M857.5 427.5C855.0 432.0 855.5 438.0 858.0 441.0M872.0 438.5L870.0 444.5" fill="none" stroke="#15171c" stroke-width="1.7" stroke-linecap="round"/><ellipse cx="871.8" cy="421.3" rx="2.6" ry="1.9" fill="#15171c"/></g><circle cx="564" cy="321.6" r="10.9" fill="#000"/><circle cx="793.5" cy="321.6" r="10.9" fill="#000"/><circle cx="1022.2" cy="321.6" r="10.9" fill="#000"/><circle cx="564" cy="474.2" r="10.9" fill="#000"/><circle cx="1022.2" cy="474.2" r="10.9" fill="#000"/><circle cx="564" cy="627.3" r="10.9" fill="#000"/><circle cx="793.5" cy="627.3" r="10.9" fill="#000"/><circle cx="1022.2" cy="627.3" r="10.9" fill="#000"/></g></svg>
<svg style="left:0;top:0" width="1302" height="900" viewBox="0 0 1302 900"><rect x="1122" y="106" width="81" height="60" fill="#434343"/><path d="M1040.95 166V111.5a5.5 5.5 0 0 1 5.5-5.5h231.9a5.5 5.5 0 0 1 5.5 5.5V166" fill="none" stroke="#575757" stroke-width="1.9"/><path d="M1121.6 106V166" stroke="#575757" stroke-width="1.9"/><path d="M1203.2 106V166" stroke="#575757" stroke-width="1.9"/><rect x="1040" y="166" width="244.8" height="6" fill="#8d8d8d"/></svg>
<svg style="left:0;top:0" width="1302" height="900" viewBox="0 0 1302 900"><rect x="1065" y="120" width="24" height="24" rx="5.5" fill="none" stroke="#fff" stroke-width="4"/><rect x="1071.6" y="126.4" width="27.6" height="27" rx="6.5" fill="#fff" stroke="#2b2b2b" stroke-width="3.2" paint-order="stroke"/><rect x="1144" y="118" width="27.4" height="27" rx="6.5" fill="#fff"/><rect x="1152.4" y="126.4" width="27.4" height="27" rx="6.5" fill="#434343" stroke="#434343" stroke-width="3.2" paint-order="stroke"/><rect x="1154.4" y="128.4" width="23.4" height="23" rx="4.5" fill="#434343" stroke="#fff" stroke-width="4"/><polygon points="1237.60,122.40 1241.83,133.78 1253.96,134.28 1244.45,141.82 1247.71,153.52 1237.60,146.80 1227.49,153.52 1230.75,141.82 1221.24,134.28 1233.37,133.78" fill="#979797" stroke="#979797" stroke-width="1.6" stroke-linejoin="round"/><polygon points="1243.60,120.00 1247.83,131.38 1259.96,131.88 1250.45,139.42 1253.71,151.12 1243.60,144.40 1233.49,151.12 1236.75,139.42 1227.24,131.88 1239.37,131.38" fill="#2b2b2b" stroke="#2b2b2b" stroke-width="4" stroke-linejoin="round"/><polygon points="1243.60,120.00 1247.83,131.38 1259.96,131.88 1250.45,139.42 1253.71,151.12 1243.60,144.40 1233.49,151.12 1236.75,139.42 1227.24,131.88 1239.37,131.38" fill="#fff" stroke="#fff" stroke-width="1.6" stroke-linejoin="round"/></svg>
<div class="abs lbl" style="left:1040.10px;top:188.08px;font-size:19.4px;line-height:22.0px;letter-spacing:-0.042px;color:#fff;font-weight:bold;">Background</div>
<svg style="left:0;top:0" width="1302" height="900" viewBox="0 0 1302 900"><rect x="1040.85" y="222.25" width="243.00" height="41.80" rx="3.55" fill="none" stroke="#575757" stroke-width="1.9"/><path d="M1252.1 222V264.4" stroke="#575757" stroke-width="1.9"/><path d="M1262.05 240.05h10.5l-5.25 6.5z" fill="#fff"/></svg><div class="abs lbl" style="left:1048.30px;top:232.74px;font-size:19.5px;line-height:22.0px;letter-spacing:0.088px;color:#fff;">Transparent</div>
<div class="abs lbl" style="left:1039.70px;top:280.64px;font-size:19.5px;line-height:22.0px;letter-spacing:0.140px;color:#fff;">Aspect Ratio</div>
<svg style="left:0;top:0" width="1302" height="900" viewBox="0 0 1302 900"><rect x="1040.85" y="314.75" width="243.00" height="41.80" rx="3.55" fill="none" stroke="#575757" stroke-width="1.9"/><path d="M1252.1 314.5V356.9" stroke="#575757" stroke-width="1.9"/><path d="M1262.05 332.55h10.5l-5.25 6.5z" fill="#fff"/></svg><div class="abs lbl" style="left:1048.30px;top:325.24px;font-size:19.5px;line-height:22.0px;letter-spacing:0.288px;color:#fff;">Unconstrained</div>
<svg style="left:0;top:0" width="1302" height="900" viewBox="0 0 1302 900"><rect x="1040.85" y="368.45" width="38.70" height="38.50" rx="3.55" fill="none" stroke="#575757" stroke-width="1.9"/></svg>
<div class="abs lbl" style="left:1090.30px;top:377.14px;font-size:19.5px;line-height:22.0px;letter-spacing:0.064px;color:#fff;">Fit to Result</div>
<div class="abs lbl" style="left:1039.70px;top:417.74px;font-size:19.5px;line-height:22.0px;letter-spacing:-0.071px;color:#fff;">Padding (%)</div>
<svg style="left:0;top:0" width="1302" height="900" viewBox="0 0 1302 900"><rect x="1040.85" y="452.15" width="243.00" height="41.50" rx="3.55" fill="none" stroke="#575757" stroke-width="1.9"/><path d="M1252.1 451.7V494.1" stroke="#575757" stroke-width="1.9"/></svg>
<div class="abs lbl" style="left:1051.30px;top:461.84px;font-size:19.5px;line-height:22.0px;letter-spacing:0.000px;color:#8e8e8e;">5</div>
<svg style="left:0;top:0" width="1302" height="900"><path d="M1262.05 466.25h10.5l-5.25 -6.5z" fill="#8e8e8e"/><path d="M1262.05 479.25h10.5l-5.25 6.5z" fill="#8e8e8e"/></svg>
<div class="abs lbl" style="left:1039.70px;top:510.44px;font-size:19.5px;line-height:22.0px;letter-spacing:0.739px;color:#fff;">Effect</div>
<svg style="left:0;top:0" width="1302" height="900" viewBox="0 0 1302 900"><rect x="1040.85" y="544.75" width="243.00" height="41.80" rx="3.55" fill="none" stroke="#575757" stroke-width="1.9"/><path d="M1252.1 544.5V586.9" stroke="#575757" stroke-width="1.9"/><path d="M1262.05 562.55h10.5l-5.25 6.5z" fill="#8e8e8e"/></svg><div class="abs lbl" style="left:1048.30px;top:555.24px;font-size:19.5px;line-height:22.0px;letter-spacing:0.094px;color:#8e8e8e;">None</div>
<svg style="left:0;top:0" width="1302" height="900" viewBox="0 0 1302 900"><rect x="1041.25" y="795.45" width="242.60" height="46.60" rx="3.55" fill="none" stroke="#575757" stroke-width="1.9"/><path d="M1252.1 795V842.5" stroke="#575757" stroke-width="1.9"/></svg>
<div class="abs lbl" style="left:1140.60px;top:808.23px;font-size:15.2px;line-height:22.0px;letter-spacing:0.400px;color:#fff;font-weight:bold;">Reset</div>
<svg style="left:0;top:0" width="1302" height="900"><path d="M1262.05 815.95h10.5l-5.25 6.5z" fill="#fff"/></svg>
<div class="abs lbl" style="left:1188.90px;top:871.14px;font-size:19.5px;line-height:22.0px;letter-spacing:0.281px;color:#fff;">Credits: 35</div>
</div></body></html>
